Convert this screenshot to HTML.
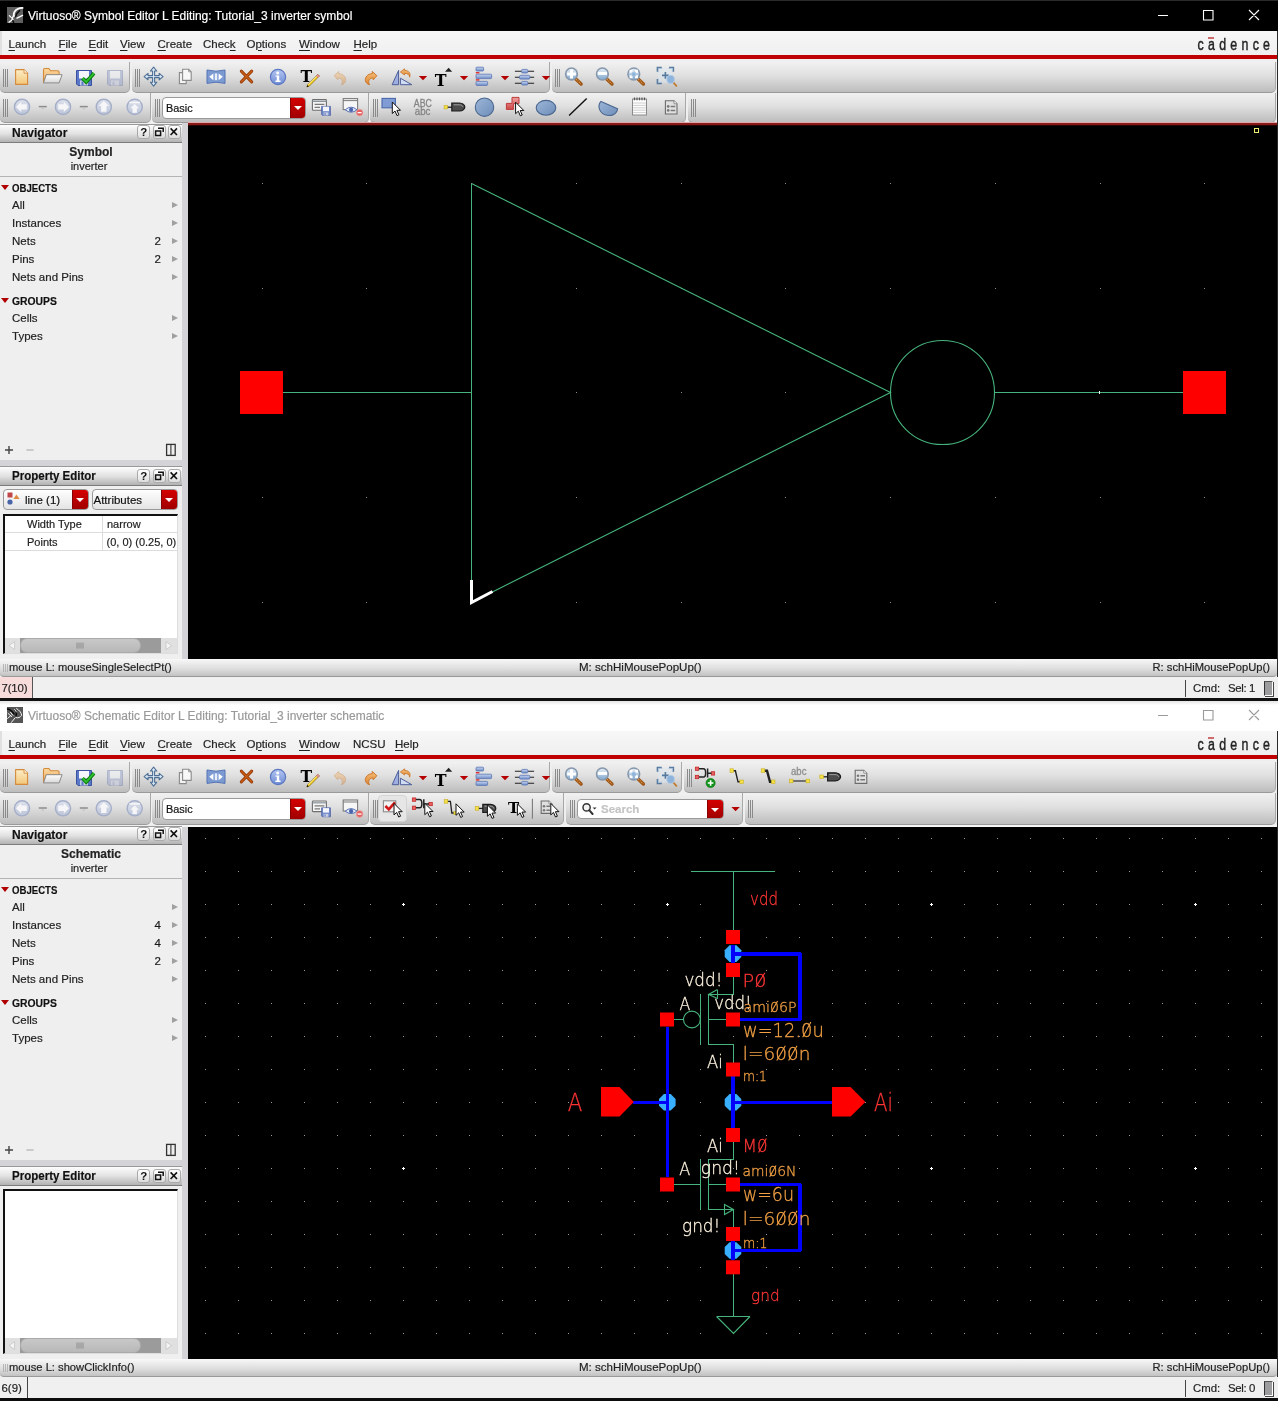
<!DOCTYPE html>
<html><head><meta charset="utf-8"><title>Virtuoso</title>
<style>
*{box-sizing:border-box;margin:0;padding:0}
html,body{width:1278px;height:1401px;overflow:hidden;background:#efefef}
body{will-change:transform;-webkit-text-stroke:0.18px;font-family:"Liberation Sans","DejaVu Sans",sans-serif;font-size:12px;color:#1a1a1a;position:relative}
.abs{position:absolute}
.win{position:absolute;left:0;width:1278px}
.title{position:absolute;left:0;top:0;width:1278px;height:31px;font-size:12px;line-height:31px;white-space:nowrap}
.title span.t{position:absolute;left:28px;top:0}
.menubar{position:absolute;left:0;width:1278px;height:24px;background:linear-gradient(#f7f7f7,#efefef);border-left:2px solid #e0e0e0}
.menubar span{position:absolute;top:0.8px;line-height:25px;font-size:11.5px;white-space:nowrap;color:#222}
.menubar u{text-decoration:underline;text-underline-offset:2px}
.redline{position:absolute;left:0;width:1278px;height:4px;background:#c00000}
.tb{position:absolute;background:linear-gradient(#f1f1f1 0%,#e0e0e0 45%,#bdbdbd 100%);border-bottom:1px solid #9a9a9a;border-right:1px solid #a8a8a8;border-radius:0 0 5px 5px}
.grip{position:absolute;width:5px;border-left:1px solid #8a8a8a;border-right:1px solid #8a8a8a}
.grip:after{content:"";position:absolute;left:1px;top:0;bottom:0;width:1px;background:#8a8a8a}
.ic{position:absolute;overflow:visible}
.panelhdr{position:absolute;left:0;width:182px;height:19px;background:linear-gradient(#fdfdfd,#e2e2e2 50%,#b2b2b2);border-bottom:1px solid #7c7c7c;border-top:1px solid #999;font-weight:bold;font-size:12px;line-height:17px;padding-left:12px;color:#111}
.pbtn{position:absolute;top:1px;width:14px;height:14px;border:1px solid #aaa;border-radius:3px;background:linear-gradient(#fff,#ddd)}
.nav{position:absolute;left:0;width:182px;background:#efefef}
.nav .row{position:absolute;left:12px;font-size:11.5px;line-height:14px;white-space:nowrap;color:#222}
.nav .sec{position:absolute;left:12px;font-size:11.5px;font-weight:bold;line-height:14px;color:#111}
.nav .cnt{position:absolute;left:140px;width:21px;text-align:right;font-size:11.5px;line-height:14px}
.tri{position:absolute;left:172px;width:0;height:0;border-left:6.2px solid #a0a0a0;border-top:3.6px solid transparent;border-bottom:3.6px solid transparent}
.dtri{position:absolute;left:1px;width:0;height:0;border-top:5px solid #b00000;border-left:4px solid transparent;border-right:4px solid transparent}
.split{position:absolute;left:182px;width:6px;background:#d4d4d8}
.canvas{position:absolute;left:188px;width:1088px;background:#000;overflow:hidden}
.status{position:absolute;left:0;width:1278px;height:18px;background:linear-gradient(#f8f8f8,#dcdcdc 60%,#c2c2c2);border-bottom:1px solid #999;border-radius:0 0 4px 4px;font-size:11.35px;line-height:16px;color:#222}
.status span{position:absolute;top:0;white-space:nowrap}
.cmd{position:absolute;left:0;width:1278px;height:21px;background:#f0f0f0;font-size:11.4px;line-height:23.5px;color:#222}
.cmd span{position:absolute;top:0;white-space:nowrap}
.combo{position:absolute;height:21px;border:1px solid #9a9a9a;border-radius:4px;background:#fff;font-size:11.3px;line-height:20.5px;padding-left:2.6px;color:#111;overflow:hidden}
.combo i{position:absolute;right:0;top:0;bottom:0;width:15px;background:linear-gradient(#d40000,#a00000);border-left:1px solid #800}
.combo i:after{content:"";position:absolute;left:3px;top:7.5px;border-top:4.5px solid #fff;border-left:4px solid transparent;border-right:4px solid transparent}
.hshtxt{font-family:"Liberation Sans","DejaVu Sans",sans-serif}
</style></head><body>

<svg width="0" height="0" style="position:absolute"><defs>
<linearGradient id="gNew" x1="0" y1="0" x2="0" y2="1"><stop offset="0" stop-color="#fdeec8"/><stop offset="1" stop-color="#f2c578"/></linearGradient>
<linearGradient id="gFold" x1="0" y1="0" x2="0" y2="1"><stop offset="0" stop-color="#fbd9a0"/><stop offset="1" stop-color="#eea95c"/></linearGradient>
<linearGradient id="gFlap" x1="0" y1="0" x2="0" y2="1"><stop offset="0" stop-color="#ffffff"/><stop offset="1" stop-color="#d8d8d8"/></linearGradient>
<linearGradient id="gBlue" x1="0" y1="0" x2="0" y2="1"><stop offset="0" stop-color="#b4c6f2"/><stop offset="1" stop-color="#6e8cd4"/></linearGradient>
<linearGradient id="gBlue2" x1="0" y1="0" x2="1" y2="1"><stop offset="0" stop-color="#9db6d8"/><stop offset="1" stop-color="#6d8db8"/></linearGradient>
<linearGradient id="gNavD" x1="0" y1="0" x2="0" y2="1"><stop offset="0" stop-color="#dde1ec"/><stop offset="1" stop-color="#bcc5d8"/></linearGradient>
<linearGradient id="gRed" x1="0" y1="0" x2="0" y2="1"><stop offset="0" stop-color="#f0a0a0"/><stop offset="1" stop-color="#cc4a4a"/></linearGradient>
<linearGradient id="gLens" x1="0" y1="0" x2="0" y2="1"><stop offset="0" stop-color="#e8f0f8"/><stop offset="1" stop-color="#7fa6cc"/></linearGradient>
<linearGradient id="gBar" x1="0" y1="0" x2="0" y2="1"><stop offset="0" stop-color="#c8d6f0"/><stop offset="1" stop-color="#6e8cc8"/></linearGradient>
<linearGradient id="gOr" x1="0" y1="0" x2="0" y2="1"><stop offset="0" stop-color="#f6c07a"/><stop offset="1" stop-color="#dc8430"/></linearGradient>
</defs></svg>
<div class="title" style="top:0;background:#000;color:#fff;box-shadow:inset 0 1px 0 #2a2a2a"><svg class="ic" style="left:7px;top:7px" width="16" height="16" viewBox="0 0 16 16"><rect width="16" height="16" fill="#606060"/><path d="M12.6 3.6 C10.6 5.2 9.2 7.4 8.6 9.6 M4 10.4 L6.6 15.4" stroke="#0c0c0c" stroke-width="1.5" fill="none" stroke-linecap="round"/><path d="M15.6 0.9 C12 1 9 2.4 7.4 5 C6.5 6.6 6.5 8 7 9" stroke="#fff" stroke-width="1.8" fill="none" stroke-linecap="round"/><path d="M2.4 8.6 L6 12.4 M6.6 8 L4.6 13.4 L2 15.2 M10 11.2 L15.6 8.4" stroke="#fff" stroke-width="1.3" fill="none" stroke-linecap="round"/></svg>
<span class="t" style="top:1px">Virtuoso® Symbol Editor L Editing: Tutorial_3 inverter symbol</span><svg class="ic" style="left:1150px;top:0" width="120" height="31" viewBox="1150 0 120 31"><path d="M1158 15.5H1168 M1203.5 10.5H1213V20H1203.5Z M1249 10L1259 20M1259 10L1249 20" stroke="#fff" stroke-width="1.1" fill="none"/></svg>
</div>
<div class="menubar" style="top:31px">
<span style="left:6.5px"><u>L</u>aunch</span>
<span style="left:56.5px"><u>F</u>ile</span>
<span style="left:86.5px"><u>E</u>dit</span>
<span style="left:118px"><u>V</u>iew</span>
<span style="left:155.5px"><u>C</u>reate</span>
<span style="left:201px">Chec<u>k</u></span>
<span style="left:244.5px">O<u>p</u>tions</span>
<span style="left:297px"><u>W</u>indow</span>
<span style="left:351.5px"><u>H</u>elp</span>
<svg class="ic" style="left:1188px;top:0" width="88" height="24" viewBox="0 0 88 24"><g transform="translate(7.6 0) scale(0.72 1)"><text x="0" y="19.4" font-family="'Liberation Sans','DejaVu Sans',sans-serif" font-size="17.2" fill="#222" stroke="#222" stroke-width="0.45" textLength="100.5" lengthAdjust="spacing">cadence</text></g><rect x="18" y="6.3" width="6" height="1.4" fill="#c03030"/></svg>

</div>
<div class="redline" style="top:55px"></div>
<div class="tb" style="left:0px;top:62px;width:130px;height:31px"></div>
<div class="tb" style="left:132px;top:62px;width:418px;height:31px"></div>
<div class="tb" style="left:552px;top:62px;width:724px;height:31px"></div>
<div class="grip" style="left:3px;top:69px;height:18px"></div>
<div class="grip" style="left:135px;top:69px;height:18px"></div>
<div class="grip" style="left:555px;top:69px;height:18px"></div>
<svg class="ic" style="left:0;top:59px" width="1278" height="34" viewBox="0 59 1278 34"><g transform="translate(21.6,77)"><path d="M-6 -7.4 H2.4 L6 -3.8 V7.4 H-6 Z" fill="url(#gNew)" stroke="#d48a3c" stroke-width="1.1" stroke-linejoin="round"/><path d="M2.4 -7.4 V-3.8 H6" fill="#fff6e0" stroke="#d48a3c" stroke-width="0.9" stroke-linejoin="round"/></g><g transform="translate(52.5,76.3)"><path d="M-9 6.5 V-6.5 Q-9 -7.8 -7.8 -7.8 H-3.6 L-2 -5.6 H5.2 Q6.6 -5.6 6.6 -4.2 V-1.5 H-6 Z" fill="url(#gFold)" stroke="#d48a3c" stroke-width="1.1" stroke-linejoin="round"/><path d="M-6.2 -1.6 H9.6 L6.6 6.6 H-9 Z" fill="url(#gFlap)" stroke="#8a8a8a" stroke-width="1" stroke-linejoin="round"/></g><g transform="translate(84,78)"><g opacity="1.0"><path d="M-7.5 -7.5 H7.5 V7.5 H-6 L-7.5 6 Z" fill="#5b78c8" stroke="#3a52a0" stroke-width="1"/><rect x="-5" y="-7" width="10" height="7.5" fill="#f4f6fb"/><rect x="-4" y="2.5" width="8" height="5" fill="#c9d0e4"/><rect x="-2.5" y="3.5" width="2" height="3.5" fill="#5b78c8"/></g><path d="M-1.5 0.2 L2.2 4 L10 -4.8" fill="none" stroke="#0a7a0a" stroke-width="3.6" stroke-linejoin="miter"/><path d="M-1.5 0.2 L2.2 4 L10 -4.8" fill="none" stroke="#2fc02f" stroke-width="1.8"/></g><g transform="translate(115,78)"><g opacity="0.42"><path d="M-7.5 -7.5 H7.5 V7.5 H-6 L-7.5 6 Z" fill="#8f9ccc" stroke="#6a78a8" stroke-width="1"/><rect x="-5" y="-7" width="10" height="7.5" fill="#f4f6fb"/><rect x="-4" y="2.5" width="8" height="5" fill="#c9d0e4"/><rect x="-2.5" y="3.5" width="2" height="3.5" fill="#8f9ccc"/></g></g><g transform="translate(153.6,76.6)"><path d="M0 -9.5 L3.2 -5.6 H1 V-1 H5.6 V-3.2 L9.5 0 L5.6 3.2 V1 H1 V5.6 H3.2 L0 9.5 L-3.2 5.6 H-1 V1 H-5.6 V3.2 L-9.5 0 L-5.6 -3.2 V-1 H-1 V-5.6 H-3.2 Z" fill="#dbe8f6" stroke="#4e6f94" stroke-width="1.1" stroke-linejoin="round"/></g><g transform="translate(185.2,76.4)"><path d="M-5.8 -3.8 H1 V7.2 H-5.8 Z" fill="#f2f2f2" stroke="#8a8a8a" stroke-width="1.1"/><path d="M-2.6 -7.2 H3.4 L6 -4.6 V4 H-2.6 Z" fill="#f8f8f8" stroke="#8a8a8a" stroke-width="1.1" stroke-linejoin="round"/><path d="M3.4 -7.2 V-4.6 H6" fill="none" stroke="#8a8a8a" stroke-width="0.8"/></g><g transform="translate(216,76.8)"><path d="M-9 -6.8 Q0 -4.4 9 -6.8 V6.6 Q0 4.2 -9 6.6 Z" fill="#7b9ad2" stroke="#5472b4" stroke-width="1"/><path d="M-6.8 0 L-2.6 -3.4 V3.4 Z M6.8 0 L2.6 -3.4 V3.4 Z" fill="#fff"/><rect x="-1.2" y="-3.4" width="2.4" height="6.8" fill="#e8eefa"/></g><g transform="translate(246.5,76.5)"><path d="M-5.2 -5.4 L5.2 5.4 M5.2 -5.4 L-5.2 5.4" stroke="#9c3c08" stroke-width="3" stroke-linecap="round"/><path d="M-5.2 -5.4 L5.2 5.4 M5.2 -5.4 L-5.2 5.4" stroke="#cc6418" stroke-width="1.2" stroke-linecap="round"/></g><g transform="translate(278,77)"><circle cx="0" cy="0" r="7.6" fill="url(#gBlue)" stroke="#5a76c0" stroke-width="1.2"/><circle cx="-0.3" cy="-4.1" r="1.5" fill="#fff"/><path d="M-2.4 -1.6 H1.2 V3.6 H2.6 V5 H-2.6 V3.6 H-1.2 V-0.2 H-2.4 Z" fill="#fff"/></g><g transform="translate(309,77)"><text x="-8.4" y="5" font-family="'DejaVu Serif','Liberation Serif',serif" font-weight="bold" font-size="16.4" fill="#000" textLength="11.6" lengthAdjust="spacingAndGlyphs">T</text><path d="M8.8 -2.6 L10.4 -1 L0.4 9 L-2.2 10 L-1.2 7.4 Z" fill="#f4d020" stroke="#8a6a10" stroke-width="0.7" stroke-linejoin="round"/><path d="M7.6 -0.8 L-0.8 7.6" stroke="#fff8c0" stroke-width="0.7"/><path d="M8.8 -2.6 L10.4 -1 L9 0.4 L7.4 -1.2 Z" fill="#f0a0a8" stroke="#b06070" stroke-width="0.6"/><path d="M-2.2 10 L-1.7 8 L-0.2 9.5 Z" fill="#111"/></g><g transform="translate(340,77)"><g opacity="0.42"><path d="M-5.9 -1.3 L-1.2 -5.6 L-1.4 -3.4 C3.6 -3.2 6.2 0.6 5.6 3.6 C5.2 5.8 3.6 7.3 1.4 7.7 C3 5.4 2.8 1.6 -1.8 0.8 L-2.2 2.8 Z" fill="url(#gOr)" stroke="#c87a30" stroke-width="0.9" stroke-linejoin="round"/></g></g><g transform="translate(371,77)"><path d="M5.9 -1.3 L1.2 -5.6 L1.4 -3.4 C-3.6 -3.2 -6.2 0.6 -5.6 3.6 C-5.2 5.8 -3.6 7.3 -1.4 7.7 C-3 5.4 -2.8 1.6 1.8 0.8 L2.2 2.8 Z" fill="url(#gOr)" stroke="#c87024" stroke-width="0.9" stroke-linejoin="round"/></g><g transform="translate(402,77)"><path d="M-3.4 -6.6 V7.7 H-9.8 Z" fill="#9eaee0" stroke="#4c5e98" stroke-width="1" stroke-linejoin="round"/><path d="M-1.6 1.2 L9.8 7.7 H-1.6 Z" fill="#d0dcf4" stroke="#4c5e98" stroke-width="1" stroke-linejoin="round"/><path d="M-1.6 -5 L2.6 -8.2 V-6.6 C7 -6.6 9 -3.6 7.6 0.2 C7.4 -2.4 5.8 -3.6 2.6 -3.6 V-2 Z" fill="url(#gOr)" stroke="#c87024" stroke-width="0.8" stroke-linejoin="round"/></g><g transform="translate(423,78)"><path d="M-4.2 -2 H4.2 L0 2.2 Z" fill="#b40000"/></g><g transform="translate(441,77)"><text x="-6.2" y="8.6" font-family="'DejaVu Serif','Liberation Serif',serif" font-weight="bold" font-size="16" fill="#000" textLength="11.8" lengthAdjust="spacingAndGlyphs">T</text><path d="M4 -5.2 L7.6 -9.2 L11.2 -5.2 Z" fill="#222"/></g><g transform="translate(464,78)"><path d="M-4.2 -2 H4.2 L0 2.2 Z" fill="#b40000"/></g><g transform="translate(483,77)"><rect x="-7" y="-9.8" width="7.6" height="3.8" rx="0.8" fill="url(#gBar)" stroke="#5874b4" stroke-width="0.8"/><rect x="-7" y="-2.8" width="15.6" height="4.4" rx="0.8" fill="url(#gBar)" stroke="#5874b4" stroke-width="0.8"/><rect x="-7" y="4.4" width="11.6" height="4" rx="0.8" fill="url(#gBar)" stroke="#5874b4" stroke-width="0.8"/><rect x="-7.2" y="-5" width="3.6" height="1.4" fill="#e03030"/><rect x="-7.2" y="2.2" width="3.6" height="1.4" fill="#e03030"/></g><g transform="translate(505,78)"><path d="M-4.2 -2 H4.2 L0 2.2 Z" fill="#b40000"/></g><g transform="translate(524.5,77)"><path d="M-9.6 -5.8 H9.6 M-9.6 0.2 H9.6 M-9.6 6.2 H9.6" stroke="#222" stroke-width="1.1"/><rect x="-3" y="-7.6" width="6.4" height="3.6" rx="1.2" fill="url(#gBar)" stroke="#5874b4" stroke-width="0.8"/><rect x="-5" y="-1.7" width="10.4" height="3.8" rx="1.2" fill="url(#gBar)" stroke="#5874b4" stroke-width="0.8"/><rect x="-3" y="4.4" width="6.4" height="3.6" rx="1.2" fill="url(#gBar)" stroke="#5874b4" stroke-width="0.8"/></g><g transform="translate(546,78)"><path d="M-4.2 -2 H4.2 L0 2.2 Z" fill="#b40000"/></g><g transform="translate(571.5,74)"><path d="M4.3 5 L9.6 10" stroke="#9c5414" stroke-width="3.4" stroke-linecap="round"/><path d="M4.6 5.3 L9.4 9.8" stroke="#e09a50" stroke-width="1.4" stroke-linecap="butt" stroke-dasharray="1 1"/><circle cx="0" cy="0" r="5.9" fill="url(#gLens)" stroke="#8797ab" stroke-width="1.5"/><path d="M-4.4 0 H4.4 M0 -4.4 V4.4" stroke="#fff" stroke-width="3"/></g><g transform="translate(602.4,74)"><path d="M4.3 5 L9.6 10" stroke="#9c5414" stroke-width="3.4" stroke-linecap="round"/><path d="M4.6 5.3 L9.4 9.8" stroke="#e09a50" stroke-width="1.4" stroke-linecap="butt" stroke-dasharray="1 1"/><circle cx="0" cy="0" r="5.9" fill="url(#gLens)" stroke="#8797ab" stroke-width="1.5"/><path d="M-4.6 -0.6 H4.6" stroke="#fff" stroke-width="3"/></g><g transform="translate(633.8,74)"><path d="M4.3 5 L9.6 10" stroke="#9c5414" stroke-width="3.4" stroke-linecap="round"/><path d="M4.6 5.3 L9.4 9.8" stroke="#e09a50" stroke-width="1.4" stroke-linecap="butt" stroke-dasharray="1 1"/><circle cx="0" cy="0" r="5.9" fill="url(#gLens)" stroke="#8797ab" stroke-width="1.5"/><path d="M-3.2 -1.2 V-3.2 H-1.2 M1.2 -3.2 H3.2 V-1.2 M3.2 1.2 V3.2 H1.2 M-1.2 3.2 H-3.2 V1.2" stroke="#fff" stroke-width="2" fill="none"/><circle r="1.8" fill="#8cb4dc"/></g><g transform="translate(665.4,75.4)"><rect x="-7.4" y="-7.4" width="14.8" height="14.8" fill="#dfe7ef" opacity="0.55"/><path d="M-8 -3.6 V-8 H-3.6 M3.6 -8 H8 V-3.6 M-8 3.6 V8 H-3.6" fill="none" stroke="#557a9e" stroke-width="1.5"/><path d="M-7 -3.2 V-7 H-3.2 M3.2 -7 H7 V-3.2 M-7 3.2 V7 H-3.2" fill="none" stroke="#a8c0d8" stroke-width="0.8"/><path d="M-3.4 0 H3.4 M0 -3.4 V3.4" stroke="#557a9e" stroke-width="1.6"/><path d="M7.5 6.6 L11 10.4" stroke="#c07a30" stroke-width="1.8" stroke-linecap="round"/><ellipse cx="5.2" cy="4" rx="3.8" ry="4.1" fill="#8fb4dc" stroke="#b4cce8" stroke-width="0.9"/></g></svg>
<div class="tb" style="left:0px;top:93px;width:151px;height:30px"></div>
<div class="tb" style="left:152px;top:93px;width:216.5px;height:30px"></div>
<div class="tb" style="left:370px;top:93px;width:316px;height:30px"></div>
<div class="tb" style="left:688px;top:93px;width:588px;height:30px"></div>
<div class="grip" style="left:3px;top:99px;height:18px"></div>
<div class="grip" style="left:155px;top:99px;height:18px"></div>
<div class="grip" style="left:373px;top:99px;height:18px"></div>
<div class="grip" style="left:691px;top:99px;height:18px"></div>
<svg class="ic" style="left:0;top:93px" width="1278" height="32" viewBox="0 93 1278 32"><g transform="translate(22,106.9)"><circle cx="0" cy="0" r="7.6" fill="url(#gNavD)" stroke="#a4aec8" stroke-width="1.4"/><path d="M-6 0 L-0.8 -5.2 V-2.7 H4.8 V2.7 H-0.8 V5.2 Z" fill="#f6f6f8"/></g><g transform="translate(42.8,106.6)"><path d="M-4 0 H4" stroke="#8c8c8c" stroke-width="1.5"/><path d="M-2 1.6 H2 L0 3.2 Z" fill="#c4c4c4"/></g><g transform="translate(63,106.9)"><circle cx="0" cy="0" r="7.6" fill="url(#gNavD)" stroke="#a4aec8" stroke-width="1.4"/><path d="M6 0 L0.8 -5.2 V-2.7 H-4.8 V2.7 H0.8 V5.2 Z" fill="#f6f6f8"/></g><g transform="translate(83.8,106.6)"><path d="M-4 0 H4" stroke="#8c8c8c" stroke-width="1.5"/><path d="M-2 1.6 H2 L0 3.2 Z" fill="#c4c4c4"/></g><g transform="translate(103.8,106.9)"><circle cx="0" cy="0" r="7.6" fill="url(#gNavD)" stroke="#a4aec8" stroke-width="1.4"/><path d="M0 -6 L-5.2 -0.8 H-2.7 V4.8 H2.7 V-0.8 H5.2 Z" fill="#f6f6f8"/></g><g transform="translate(134.7,106.9)"><circle cx="0" cy="0" r="7.6" fill="url(#gNavD)" stroke="#a4aec8" stroke-width="1.4"/><path d="M0 -2.8 L-4.4 1.4 H-2.2 V5.8 H2.2 V1.4 H4.4 Z" fill="#f6f6f8"/><rect x="-5.4" y="-5.2" width="10.8" height="1.6" fill="#f6f6f8"/></g><g transform="translate(321,107)"><rect x="-8.6" y="-7.4" width="14" height="10.6" rx="0.8" fill="#f4f4f4" stroke="#6e6e6e" stroke-width="1.1"/><path d="M-8.6 -5.6 H5.4" stroke="#8a949c" stroke-width="1.2"/><path d="M-6.4 -2.6 H3.4 M-6.4 0.4 H-1" stroke="#7a7a7a" stroke-width="1.2"/><g transform="translate(5,3.9) scale(0.6)"><g opacity="1"><path d="M-7.5 -7.5 H7.5 V7.5 H-6 L-7.5 6 Z" fill="#6c84c8" stroke="#44589c" stroke-width="1"/><rect x="-5" y="-7" width="10" height="7.5" fill="#f4f6fb"/><rect x="-4" y="2.5" width="8" height="5" fill="#c9d0e4"/><rect x="-2.5" y="3.5" width="2" height="3.5" fill="#6c84c8"/></g></g></g><g transform="translate(351.6,107)"><rect x="-8.4" y="-8.4" width="14.4" height="11" fill="#f6f6f6" stroke="#7a7a7a" stroke-width="1.1"/><path d="M-8.4 -6.4 H6" stroke="#7a7a7a" stroke-width="1"/><path d="M-6.4 2.8 Q-0.6 -2.4 5.4 2.8 Q-0.6 7.6 -6.4 2.8 Z" fill="#e4ecfa" stroke="#5a72b4" stroke-width="1"/><circle cx="-0.5" cy="2.8" r="2.1" fill="#4a64ac"/><circle cx="8" cy="5.6" r="3.4" fill="#e46060" stroke="#f0b0b0" stroke-width="0.6"/><rect x="6" y="5" width="4" height="1.3" fill="#fff"/></g><g transform="translate(391,107)"><rect x="-9" y="-8.6" width="13.4" height="9.4" fill="#7f9cd4" stroke="#4a68ac" stroke-width="1.1"/><g transform="translate(1.3,-5)"><path d="M0 0 V11.5 L2.7 9 L4.7 13.6 L6.6 12.8 L4.6 8.3 H8.2 Z" fill="#fff" stroke="#111" stroke-width="1" stroke-linejoin="round"/></g></g><g transform="translate(422.6,107)"><text x="-8.8" y="-0.2" font-family="'Liberation Sans','DejaVu Sans',sans-serif" font-size="10.2" fill="#858585" stroke="#858585" stroke-width="0.3" textLength="18" lengthAdjust="spacingAndGlyphs">ABC</text><text x="-7.8" y="8.2" font-family="'Liberation Sans','DejaVu Sans',sans-serif" font-size="10.2" fill="#858585" stroke="#858585" stroke-width="0.3" textLength="15.6" lengthAdjust="spacingAndGlyphs">abc</text></g><g transform="translate(453,107)"><path d="M-7 0.2 H-1" stroke="#222" stroke-width="1.3"/><rect x="-8.9" y="-1.5" width="3.4" height="3.4" fill="#f4e04a" stroke="#c8b020" stroke-width="0.6"/><path d="M-1.2 -4 H6.3999999999999995 C10.200000000000001 -4 11.8 -1.6 11.8 0 C11.8 1.6 10.200000000000001 4 6.3999999999999995 4 H-1.2 Z" fill="#4c4c4c" stroke="#1c1c1c" stroke-width="1.2"/><path d="M0.6000000000000001 -2.2 H6.2 C8.600000000000001 -2.2 9.8 -1 9.8 0" fill="none" stroke="#a8a8a8" stroke-width="0.9"/></g><g transform="translate(484.5,107.2)"><circle r="9.2" fill="url(#gBlue2)" stroke="#4a668e" stroke-width="1.1"/></g><g transform="translate(512.4,107)"><path d="M-0.4 -9.6 H6.6 V-3.4 H1 V2.4 H-6 V-3.6 H-0.4 Z" fill="url(#gRed)" stroke="#c03a3a" stroke-width="1"/><g transform="translate(3.2,-4.8)"><path d="M0 0 V11.5 L2.7 9 L4.7 13.6 L6.6 12.8 L4.6 8.3 H8.2 Z" fill="#fff" stroke="#111" stroke-width="1" stroke-linejoin="round"/></g></g><g transform="translate(546,107)"><ellipse rx="9.8" ry="7.4" cy="0.8" fill="url(#gBlue2)" stroke="#4a668e" stroke-width="1.1"/></g><g transform="translate(577.9,107)"><path d="M-8.8 8.6 L8.8 -8.6" stroke="#111" stroke-width="1.4"/></g><g transform="translate(608,107.4)"><path d="M-7 -6 L9.6 1.4 C9 7 3 9.4 -3 7.4 C-8.6 5.4 -11 -1.8 -7 -6 Z" fill="url(#gBlue2)" stroke="#4a668e" stroke-width="1.1" stroke-linejoin="round"/></g><g transform="translate(639.5,106.6)"><rect x="-7" y="-7.6" width="14" height="16" fill="#fdfdfd" stroke="#8a8a8a" stroke-width="1"/><path d="M-6.4 -3.6 H6.4 M-6.4 -1.2 H6.4 M-6.4 1.2 H6.4 M-6.4 3.6 H6.4 M-6.4 6 H6.4" stroke="#c4c4c4" stroke-width="0.8"/><path d="M-5 -9 V-6.4 M-2.5 -9 V-6.4 M0 -9 V-6.4 M2.5 -9 V-6.4 M5 -9 V-6.4" stroke="#555" stroke-width="1.2"/></g><g transform="translate(671.2,107.4)"><path d="M-5.8 -6.6 H2.8 L5.8 -3.5999999999999996 V6.6 H-5.8 Z" fill="#e0e0e0" stroke="#6c6c6c" stroke-width="1.1"/><path d="M2.8 -6.6 V-3.5999999999999996 H5.8" fill="#fff" stroke="#7a7a7a" stroke-width="0.8"/><circle cx="-3.0" cy="-1" r="1.3" fill="#777"/><circle cx="-3.0" cy="3" r="1.3" fill="#777"/><path d="M-0.5999999999999996 -1 H4.0 M-0.5999999999999996 3 H4.0" stroke="#777" stroke-width="1.5"/></g></svg>
<div class="combo" style="left:162px;top:97px;width:144px;height:22px;font-size:10.9px;line-height:21.6px;padding-left:3px">Basic<i></i></div>
<div class="abs" style="left:0;top:123px;width:182px;height:536px;background:#efefef"></div>
<div class="split" style="top:123px;height:536px"></div>
<div class="panelhdr" style="top:124px;height:19px;line-height:17px">Navigator<div class="pbtn" style="left:137px;top:0.4px;width:13px;height:13.6px"></div><div class="pbtn" style="left:152.5px;top:0.4px;width:13px;height:13.6px"></div><div class="pbtn" style="left:167.5px;top:0.4px;width:13px;height:13.6px"></div><svg class="ic" style="left:137px;top:0.4px" width="45" height="14" viewBox="0 0 45 14"><text x="3.2" y="11" font-family="'Liberation Sans','DejaVu Sans',sans-serif" font-weight="bold" font-size="11.5" fill="#111">?</text><path d="M21 3.2 H26.2 V7 M18.6 6 H23.6 V10.6 H18.6 Z" fill="none" stroke="#111" stroke-width="1.5"/><path d="M33.6 3.4 L40 10 M40 3.4 L33.6 10" stroke="#111" stroke-width="1.6"/></svg></div>
<div class="abs" style="left:0;top:145px;width:182px;text-align:center;font-weight:bold;font-size:12px;line-height:14px;color:#222">Symbol</div>
<div class="abs" style="left:0;top:159px;width:178px;text-align:center;font-size:11px;line-height:14px;color:#222">inverter</div>
<div class="abs" style="left:0;top:176px;width:182px;height:1px;background:#b4b4b4"></div>
<div class="nav" style="top:0;height:0">
<div class="sec" style="top:181px;transform:scaleX(0.835);transform-origin:0 50%">OBJECTS</div>
<div class="dtri" style="top:185px"></div>
<div class="row" style="top:198px">All</div>
<div class="tri" style="top:201.5px"></div>
<div class="row" style="top:216px">Instances</div>
<div class="tri" style="top:219.5px"></div>
<div class="row" style="top:234px">Nets</div>
<div class="tri" style="top:237.5px"></div>
<div class="cnt" style="top:234px">2</div>
<div class="row" style="top:252px">Pins</div>
<div class="tri" style="top:255.5px"></div>
<div class="cnt" style="top:252px">2</div>
<div class="row" style="top:270px">Nets and Pins</div>
<div class="tri" style="top:273.5px"></div>
<div class="sec" style="top:294px;transform:scaleX(0.9);transform-origin:0 50%">GROUPS</div>
<div class="dtri" style="top:298px"></div>
<div class="row" style="top:311px">Cells</div>
<div class="tri" style="top:314.5px"></div>
<div class="row" style="top:329px">Types</div>
<div class="tri" style="top:332.5px"></div>
</div>
<svg class="ic" style="left:0;top:440px" width="182" height="20" viewBox="0 0 182 20"><path d="M5 10 H13 M9 6 V14" stroke="#444" stroke-width="1.4"/><path d="M26.4 10 H33.6" stroke="#bbb" stroke-width="1.4"/><rect x="166.6" y="4.4" width="8.6" height="11" fill="none" stroke="#333" stroke-width="1.3"/><path d="M170.9 4.4 V15.4" stroke="#333" stroke-width="1.1"/></svg>
<div class="abs" style="left:0;top:460px;width:182px;height:6px;background:#d4d4d8"></div>
<div class="panelhdr" style="top:466px;height:20px;line-height:19px"><span style="display:inline-block;transform:scaleX(0.96);transform-origin:0 50%">Property Editor</span><div class="pbtn" style="left:137px;top:2px;width:13px;height:13.6px"></div><div class="pbtn" style="left:152.5px;top:2px;width:13px;height:13.6px"></div><div class="pbtn" style="left:167.5px;top:2px;width:13px;height:13.6px"></div><svg class="ic" style="left:137px;top:2px" width="45" height="14" viewBox="0 0 45 14"><text x="3.2" y="11" font-family="'Liberation Sans','DejaVu Sans',sans-serif" font-weight="bold" font-size="11.5" fill="#111">?</text><path d="M21 3.2 H26.2 V7 M18.6 6 H23.6 V10.6 H18.6 Z" fill="none" stroke="#111" stroke-width="1.5"/><path d="M33.6 3.4 L40 10 M40 3.4 L33.6 10" stroke="#111" stroke-width="1.6"/></svg></div>
<div class="combo" style="left:3px;top:489px;width:86px;height:21px;padding-left:21px;font-size:11.5px;background:linear-gradient(#fff,#e4e4e4)">line (1)<i style="width:16px"></i><svg class="ic" style="left:3px;top:2px" width="14" height="14" viewBox="0 0 14 14"><rect x="0.5" y="0.5" width="5" height="5" fill="#c04848"/><path d="M6.4 7 L9.4 2.4 L12.6 7 Z" fill="#e08a40"/><circle cx="3" cy="10" r="2.6" fill="#4a64a8"/></svg></div>
<div class="combo" style="left:91.5px;top:489px;width:86.5px;height:21px;padding-left:1px;font-size:11.5px;background:linear-gradient(#fff,#e4e4e4)">Attributes<i style="width:16px"></i></div>
<div class="abs" style="left:3px;top:514px;width:175px;height:140px;background:#fff;border-top:2px solid #111;border-left:2px solid #111;border-right:1px solid #ddd;border-bottom:1px solid #ddd"></div>
<div class="abs" style="left:5px;top:532px;width:172px;height:1px;background:#dcdcdc"></div><div class="abs" style="left:5px;top:550px;width:172px;height:1px;background:#dcdcdc"></div><div class="abs" style="left:102px;top:516px;width:1px;height:35px;background:#dcdcdc"></div>
<div class="abs" style="left:27px;top:517.4px;font-size:11px;line-height:14px;white-space:nowrap;color:#222">Width Type</div>
<div class="abs" style="left:107px;top:517.4px;font-size:11px;line-height:14px;white-space:nowrap;color:#222">narrow</div>
<div class="abs" style="left:27px;top:535.4px;font-size:11px;line-height:14px;white-space:nowrap;color:#222">Points</div>
<div class="abs" style="left:106.5px;top:535.4px;font-size:11px;line-height:14px;white-space:nowrap;color:#222">(0, 0) (0.25, 0)</div>
<div class="abs" style="left:5px;top:638px;width:172px;height:15px;background:#9b9b9b"></div>
<div class="abs" style="left:5px;top:638px;width:15px;height:15px;background:#e0e0e0"></div><div class="abs" style="left:161px;top:638px;width:16px;height:15px;background:#e0e0e0"></div>
<div class="abs" style="left:20px;top:638px;width:121px;height:15px;background:linear-gradient(#c8c8c8,#b8b8b8);border-radius:7px;border:1px solid #aaa"></div>
<svg class="ic" style="left:5px;top:638px" width="172" height="15" viewBox="0 0 172 15"><path d="M9.6 3.6 L4 7.6 L9.6 11.6 Z" fill="#f4f4f4" stroke="#c4c4c4" stroke-width="0.8"/><path d="M161 3.6 L166.6 7.6 L161 11.6 Z" fill="#f4f4f4" stroke="#c4c4c4" stroke-width="0.8"/><path d="M72 4.6 V10.6 M74 4.6 V10.6 M76 4.6 V10.6 M78 4.6 V10.6" stroke="#888" stroke-width="0.9"/></svg>
<div class="abs" style="left:188px;top:122px;width:1090px;height:4px;background:linear-gradient(#e0a8a8 0,#e0a8a8 25%,#8a1a1a 25%,#861818 75%,#3a0808 75%,#180000 100%)"></div>
<svg class="ic" style="left:188px;top:126px;background:#000" width="1089" height="533" viewBox="188 126 1089 533">
<path d="M262 183h1v1h-1zM262 288h1v1h-1zM262 392h1v1h-1zM262 497h1v1h-1zM262 602h1v1h-1zM366 183h1v1h-1zM366 288h1v1h-1zM366 392h1v1h-1zM366 497h1v1h-1zM366 602h1v1h-1zM471 183h1v1h-1zM471 288h1v1h-1zM471 392h1v1h-1zM471 497h1v1h-1zM471 602h1v1h-1zM576 183h1v1h-1zM576 288h1v1h-1zM576 392h1v1h-1zM576 497h1v1h-1zM576 602h1v1h-1zM681 183h1v1h-1zM681 288h1v1h-1zM681 392h1v1h-1zM681 497h1v1h-1zM681 602h1v1h-1zM785 183h1v1h-1zM785 288h1v1h-1zM785 392h1v1h-1zM785 497h1v1h-1zM785 602h1v1h-1zM890 183h1v1h-1zM890 288h1v1h-1zM890 392h1v1h-1zM890 497h1v1h-1zM890 602h1v1h-1zM995 183h1v1h-1zM995 288h1v1h-1zM995 392h1v1h-1zM995 497h1v1h-1zM995 602h1v1h-1zM1100 183h1v1h-1zM1100 288h1v1h-1zM1100 392h1v1h-1zM1100 497h1v1h-1zM1100 602h1v1h-1zM1204 183h1v1h-1zM1204 288h1v1h-1zM1204 392h1v1h-1zM1204 497h1v1h-1zM1204 602h1v1h-1z" fill="#8c8c8c" shape-rendering="crispEdges"/>
<path d="M471.5 183.5 V603 M283 392.5 H471.5 M995 392.5 H1183" fill="none" stroke="#46b47c" stroke-width="1" shape-rendering="crispEdges"/>
<path d="M471.5 183.5 L890.5 392.5 L471.5 602.5" fill="none" stroke="#46b47c" stroke-width="1.1"/>
<circle cx="942.5" cy="392.5" r="52" fill="none" stroke="#46b47c" stroke-width="1.1"/>
<rect x="240" y="371" width="43" height="43" fill="#ff0000"/><rect x="1183" y="371" width="43" height="43" fill="#ff0000"/>
<rect x="1099" y="391" width="1" height="3" fill="#fff"/>
<path d="M471.5 580 V602.5 L492.5 591.5" fill="none" stroke="#fff" stroke-width="3" stroke-linejoin="miter"/>
<rect x="1254.5" y="128.5" width="4" height="4" fill="none" stroke="#f0ec70" stroke-width="1" shape-rendering="crispEdges"/>
</svg>
<div class="abs" style="left:1277px;top:31px;width:1px;height:668px;background:#2a2a2a"></div>
<div class="cmd" style="top:677px">
<div class="abs" style="left:0;top:0;width:33px;height:21px;background:#f8dcdc;border-right:1px solid #555"></div><span style="left:1.5px;letter-spacing:-0.15px">7(10)</span>
<div class="abs" style="left:1185px;top:3px;width:1px;height:17px;background:#444"></div><span style="left:1193px">Cmd:</span><span style="left:1228px;letter-spacing:-0.35px">Sel: 1</span>
<div class="abs" style="left:1264px;top:4px;width:9px;height:15px;background:#9c9c9e;border-left:1px solid #333;border-top:1px solid #555;border-right:1px solid #fff;border-bottom:1px solid #fff;box-shadow:1px 1px 0 #444"></div>
</div>
<div class="status" style="top:659px;width:1277px"><svg class="ic" style="left:3px;top:5px" width="6" height="8" viewBox="0 0 6 8"><path d="M0.5 0V8M2.5 0V8M4.5 0V8" stroke="#aaa" stroke-width="0.8"/></svg><span style="left:9px;font-size:11.18px">mouse L: mouseSingleSelectPt()</span><span style="left:579px;font-size:11.55px">M: schHiMousePopUp()</span><span style="left:1152.5px;font-size:11.2px">R: schHiMousePopUp()</span></div>
<div class="abs" style="left:0;top:698px;width:1278px;height:3px;background:#0c0c0c"></div><div class="abs" style="left:0;top:698px;width:1278px;height:3px;background:#111"></div>
<div class="title" style="top:701px;height:30px;line-height:30px;background:linear-gradient(#e4e4e4,#fff 4px);color:#999"><svg class="ic" style="left:7px;top:6px" width="16" height="16" viewBox="0 0 16 16"><rect width="16" height="16" fill="#555"/><path d="M0.6 2 C3 2.4 5.4 4.4 7 7 M8 3 C9.4 4.6 9.8 6.6 9 8.6" stroke="#0c0c0c" stroke-width="1.6" fill="none" stroke-linecap="round"/><path d="M1 6.4 L4.6 9.6 M3.6 5.4 L6 8.4 M0.6 11.4 L4 8.4 M4.4 15.4 L8 11 M9.6 1.6 C12.6 3.4 14.6 6 14.6 8.4 C13.4 10.4 11 11.4 9 10.6 M7.6 2.4 L9.4 5" stroke="#f4f4f4" stroke-width="1" fill="none" stroke-linecap="round"/></svg>
<span class="t">Virtuoso® Schematic Editor L Editing: Tutorial_3 inverter schematic</span><svg class="ic" style="left:1150px;top:0" width="120" height="30" viewBox="1150 0 120 30"><path d="M1158 14.5H1168 M1203.5 9.5H1213V19H1203.5Z M1249 9L1259 19M1259 9L1249 19" stroke="#9a9a9a" stroke-width="1.1" fill="none"/></svg>
</div>
<div class="menubar" style="top:731px">
<span style="left:6.5px"><u>L</u>aunch</span>
<span style="left:56.5px"><u>F</u>ile</span>
<span style="left:86.5px"><u>E</u>dit</span>
<span style="left:118px"><u>V</u>iew</span>
<span style="left:155.5px"><u>C</u>reate</span>
<span style="left:201px">Chec<u>k</u></span>
<span style="left:244.5px">O<u>p</u>tions</span>
<span style="left:297px"><u>W</u>indow</span>
<span style="left:351px">NCSU</span>
<span style="left:393px"><u>H</u>elp</span>
<svg class="ic" style="left:1188px;top:0" width="88" height="24" viewBox="0 0 88 24"><g transform="translate(7.6 0) scale(0.72 1)"><text x="0" y="19.4" font-family="'Liberation Sans','DejaVu Sans',sans-serif" font-size="17.2" fill="#222" stroke="#222" stroke-width="0.45" textLength="100.5" lengthAdjust="spacing">cadence</text></g><rect x="18" y="6.3" width="6" height="1.4" fill="#c03030"/></svg>

</div>
<div class="redline" style="top:755px"></div>
<div class="tb" style="left:0px;top:762px;width:130px;height:31px"></div>
<div class="tb" style="left:132px;top:762px;width:418px;height:31px"></div>
<div class="tb" style="left:552px;top:762px;width:130px;height:31px"></div>
<div class="tb" style="left:684px;top:762px;width:592px;height:31px"></div>
<div class="grip" style="left:3px;top:769px;height:18px"></div>
<div class="grip" style="left:135px;top:769px;height:18px"></div>
<div class="grip" style="left:555px;top:769px;height:18px"></div>
<div class="grip" style="left:687px;top:769px;height:18px"></div>
<svg class="ic" style="left:0;top:759px" width="1278" height="34" viewBox="0 759 1278 34"><g transform="translate(21.6,777)"><path d="M-6 -7.4 H2.4 L6 -3.8 V7.4 H-6 Z" fill="url(#gNew)" stroke="#d48a3c" stroke-width="1.1" stroke-linejoin="round"/><path d="M2.4 -7.4 V-3.8 H6" fill="#fff6e0" stroke="#d48a3c" stroke-width="0.9" stroke-linejoin="round"/></g><g transform="translate(52.5,776.3)"><path d="M-9 6.5 V-6.5 Q-9 -7.8 -7.8 -7.8 H-3.6 L-2 -5.6 H5.2 Q6.6 -5.6 6.6 -4.2 V-1.5 H-6 Z" fill="url(#gFold)" stroke="#d48a3c" stroke-width="1.1" stroke-linejoin="round"/><path d="M-6.2 -1.6 H9.6 L6.6 6.6 H-9 Z" fill="url(#gFlap)" stroke="#8a8a8a" stroke-width="1" stroke-linejoin="round"/></g><g transform="translate(84,778)"><g opacity="1.0"><path d="M-7.5 -7.5 H7.5 V7.5 H-6 L-7.5 6 Z" fill="#5b78c8" stroke="#3a52a0" stroke-width="1"/><rect x="-5" y="-7" width="10" height="7.5" fill="#f4f6fb"/><rect x="-4" y="2.5" width="8" height="5" fill="#c9d0e4"/><rect x="-2.5" y="3.5" width="2" height="3.5" fill="#5b78c8"/></g><path d="M-1.5 0.2 L2.2 4 L10 -4.8" fill="none" stroke="#0a7a0a" stroke-width="3.6" stroke-linejoin="miter"/><path d="M-1.5 0.2 L2.2 4 L10 -4.8" fill="none" stroke="#2fc02f" stroke-width="1.8"/></g><g transform="translate(115,778)"><g opacity="0.42"><path d="M-7.5 -7.5 H7.5 V7.5 H-6 L-7.5 6 Z" fill="#8f9ccc" stroke="#6a78a8" stroke-width="1"/><rect x="-5" y="-7" width="10" height="7.5" fill="#f4f6fb"/><rect x="-4" y="2.5" width="8" height="5" fill="#c9d0e4"/><rect x="-2.5" y="3.5" width="2" height="3.5" fill="#8f9ccc"/></g></g><g transform="translate(153.6,776.6)"><path d="M0 -9.5 L3.2 -5.6 H1 V-1 H5.6 V-3.2 L9.5 0 L5.6 3.2 V1 H1 V5.6 H3.2 L0 9.5 L-3.2 5.6 H-1 V1 H-5.6 V3.2 L-9.5 0 L-5.6 -3.2 V-1 H-1 V-5.6 H-3.2 Z" fill="#dbe8f6" stroke="#4e6f94" stroke-width="1.1" stroke-linejoin="round"/></g><g transform="translate(185.2,776.4)"><path d="M-5.8 -3.8 H1 V7.2 H-5.8 Z" fill="#f2f2f2" stroke="#8a8a8a" stroke-width="1.1"/><path d="M-2.6 -7.2 H3.4 L6 -4.6 V4 H-2.6 Z" fill="#f8f8f8" stroke="#8a8a8a" stroke-width="1.1" stroke-linejoin="round"/><path d="M3.4 -7.2 V-4.6 H6" fill="none" stroke="#8a8a8a" stroke-width="0.8"/></g><g transform="translate(216,776.8)"><path d="M-9 -6.8 Q0 -4.4 9 -6.8 V6.6 Q0 4.2 -9 6.6 Z" fill="#7b9ad2" stroke="#5472b4" stroke-width="1"/><path d="M-6.8 0 L-2.6 -3.4 V3.4 Z M6.8 0 L2.6 -3.4 V3.4 Z" fill="#fff"/><rect x="-1.2" y="-3.4" width="2.4" height="6.8" fill="#e8eefa"/></g><g transform="translate(246.5,776.5)"><path d="M-5.2 -5.4 L5.2 5.4 M5.2 -5.4 L-5.2 5.4" stroke="#9c3c08" stroke-width="3" stroke-linecap="round"/><path d="M-5.2 -5.4 L5.2 5.4 M5.2 -5.4 L-5.2 5.4" stroke="#cc6418" stroke-width="1.2" stroke-linecap="round"/></g><g transform="translate(278,777)"><circle cx="0" cy="0" r="7.6" fill="url(#gBlue)" stroke="#5a76c0" stroke-width="1.2"/><circle cx="-0.3" cy="-4.1" r="1.5" fill="#fff"/><path d="M-2.4 -1.6 H1.2 V3.6 H2.6 V5 H-2.6 V3.6 H-1.2 V-0.2 H-2.4 Z" fill="#fff"/></g><g transform="translate(309,777)"><text x="-8.4" y="5" font-family="'DejaVu Serif','Liberation Serif',serif" font-weight="bold" font-size="16.4" fill="#000" textLength="11.6" lengthAdjust="spacingAndGlyphs">T</text><path d="M8.8 -2.6 L10.4 -1 L0.4 9 L-2.2 10 L-1.2 7.4 Z" fill="#f4d020" stroke="#8a6a10" stroke-width="0.7" stroke-linejoin="round"/><path d="M7.6 -0.8 L-0.8 7.6" stroke="#fff8c0" stroke-width="0.7"/><path d="M8.8 -2.6 L10.4 -1 L9 0.4 L7.4 -1.2 Z" fill="#f0a0a8" stroke="#b06070" stroke-width="0.6"/><path d="M-2.2 10 L-1.7 8 L-0.2 9.5 Z" fill="#111"/></g><g transform="translate(340,777)"><g opacity="0.42"><path d="M-5.9 -1.3 L-1.2 -5.6 L-1.4 -3.4 C3.6 -3.2 6.2 0.6 5.6 3.6 C5.2 5.8 3.6 7.3 1.4 7.7 C3 5.4 2.8 1.6 -1.8 0.8 L-2.2 2.8 Z" fill="url(#gOr)" stroke="#c87a30" stroke-width="0.9" stroke-linejoin="round"/></g></g><g transform="translate(371,777)"><path d="M5.9 -1.3 L1.2 -5.6 L1.4 -3.4 C-3.6 -3.2 -6.2 0.6 -5.6 3.6 C-5.2 5.8 -3.6 7.3 -1.4 7.7 C-3 5.4 -2.8 1.6 1.8 0.8 L2.2 2.8 Z" fill="url(#gOr)" stroke="#c87024" stroke-width="0.9" stroke-linejoin="round"/></g><g transform="translate(402,777)"><path d="M-3.4 -6.6 V7.7 H-9.8 Z" fill="#9eaee0" stroke="#4c5e98" stroke-width="1" stroke-linejoin="round"/><path d="M-1.6 1.2 L9.8 7.7 H-1.6 Z" fill="#d0dcf4" stroke="#4c5e98" stroke-width="1" stroke-linejoin="round"/><path d="M-1.6 -5 L2.6 -8.2 V-6.6 C7 -6.6 9 -3.6 7.6 0.2 C7.4 -2.4 5.8 -3.6 2.6 -3.6 V-2 Z" fill="url(#gOr)" stroke="#c87024" stroke-width="0.8" stroke-linejoin="round"/></g><g transform="translate(423,778)"><path d="M-4.2 -2 H4.2 L0 2.2 Z" fill="#b40000"/></g><g transform="translate(441,777)"><text x="-6.2" y="8.6" font-family="'DejaVu Serif','Liberation Serif',serif" font-weight="bold" font-size="16" fill="#000" textLength="11.8" lengthAdjust="spacingAndGlyphs">T</text><path d="M4 -5.2 L7.6 -9.2 L11.2 -5.2 Z" fill="#222"/></g><g transform="translate(464,778)"><path d="M-4.2 -2 H4.2 L0 2.2 Z" fill="#b40000"/></g><g transform="translate(483,777)"><rect x="-7" y="-9.8" width="7.6" height="3.8" rx="0.8" fill="url(#gBar)" stroke="#5874b4" stroke-width="0.8"/><rect x="-7" y="-2.8" width="15.6" height="4.4" rx="0.8" fill="url(#gBar)" stroke="#5874b4" stroke-width="0.8"/><rect x="-7" y="4.4" width="11.6" height="4" rx="0.8" fill="url(#gBar)" stroke="#5874b4" stroke-width="0.8"/><rect x="-7.2" y="-5" width="3.6" height="1.4" fill="#e03030"/><rect x="-7.2" y="2.2" width="3.6" height="1.4" fill="#e03030"/></g><g transform="translate(505,778)"><path d="M-4.2 -2 H4.2 L0 2.2 Z" fill="#b40000"/></g><g transform="translate(524.5,777)"><path d="M-9.6 -5.8 H9.6 M-9.6 0.2 H9.6 M-9.6 6.2 H9.6" stroke="#222" stroke-width="1.1"/><rect x="-3" y="-7.6" width="6.4" height="3.6" rx="1.2" fill="url(#gBar)" stroke="#5874b4" stroke-width="0.8"/><rect x="-5" y="-1.7" width="10.4" height="3.8" rx="1.2" fill="url(#gBar)" stroke="#5874b4" stroke-width="0.8"/><rect x="-3" y="4.4" width="6.4" height="3.6" rx="1.2" fill="url(#gBar)" stroke="#5874b4" stroke-width="0.8"/></g><g transform="translate(546,778)"><path d="M-4.2 -2 H4.2 L0 2.2 Z" fill="#b40000"/></g><g transform="translate(571.5,774)"><path d="M4.3 5 L9.6 10" stroke="#9c5414" stroke-width="3.4" stroke-linecap="round"/><path d="M4.6 5.3 L9.4 9.8" stroke="#e09a50" stroke-width="1.4" stroke-linecap="butt" stroke-dasharray="1 1"/><circle cx="0" cy="0" r="5.9" fill="url(#gLens)" stroke="#8797ab" stroke-width="1.5"/><path d="M-4.4 0 H4.4 M0 -4.4 V4.4" stroke="#fff" stroke-width="3"/></g><g transform="translate(602.4,774)"><path d="M4.3 5 L9.6 10" stroke="#9c5414" stroke-width="3.4" stroke-linecap="round"/><path d="M4.6 5.3 L9.4 9.8" stroke="#e09a50" stroke-width="1.4" stroke-linecap="butt" stroke-dasharray="1 1"/><circle cx="0" cy="0" r="5.9" fill="url(#gLens)" stroke="#8797ab" stroke-width="1.5"/><path d="M-4.6 -0.6 H4.6" stroke="#fff" stroke-width="3"/></g><g transform="translate(633.8,774)"><path d="M4.3 5 L9.6 10" stroke="#9c5414" stroke-width="3.4" stroke-linecap="round"/><path d="M4.6 5.3 L9.4 9.8" stroke="#e09a50" stroke-width="1.4" stroke-linecap="butt" stroke-dasharray="1 1"/><circle cx="0" cy="0" r="5.9" fill="url(#gLens)" stroke="#8797ab" stroke-width="1.5"/><path d="M-3.2 -1.2 V-3.2 H-1.2 M1.2 -3.2 H3.2 V-1.2 M3.2 1.2 V3.2 H1.2 M-1.2 3.2 H-3.2 V1.2" stroke="#fff" stroke-width="2" fill="none"/><circle r="1.8" fill="#8cb4dc"/></g><g transform="translate(665.4,775.4)"><rect x="-7.4" y="-7.4" width="14.8" height="14.8" fill="#dfe7ef" opacity="0.55"/><path d="M-8 -3.6 V-8 H-3.6 M3.6 -8 H8 V-3.6 M-8 3.6 V8 H-3.6" fill="none" stroke="#557a9e" stroke-width="1.5"/><path d="M-7 -3.2 V-7 H-3.2 M3.2 -7 H7 V-3.2 M-7 3.2 V7 H-3.2" fill="none" stroke="#a8c0d8" stroke-width="0.8"/><path d="M-3.4 0 H3.4 M0 -3.4 V3.4" stroke="#557a9e" stroke-width="1.6"/><path d="M7.5 6.6 L11 10.4" stroke="#c07a30" stroke-width="1.8" stroke-linecap="round"/><ellipse cx="5.2" cy="4" rx="3.8" ry="4.1" fill="#8fb4dc" stroke="#b4cce8" stroke-width="0.9"/></g><g transform="translate(704,777)"><rect x="-8.7" y="-9.899999999999999" width="3.4" height="3.4" fill="#e86060" stroke="#c02020" stroke-width="0.7"/><rect x="-8.7" y="-1.7" width="3.4" height="3.4" fill="#e86060" stroke="#c02020" stroke-width="0.7"/><rect x="7.3" y="-5.3" width="3.4" height="3.4" fill="#e86060" stroke="#c02020" stroke-width="0.7"/><path d="M-5 -8.2 H-0.6 C2.4 -8.2 2.4 0 -0.6 0 H-5" fill="none" stroke="#222" stroke-width="1.5"/><path d="M3.6 -8.6 V0.4 M3.6 -3.8 H7.4" stroke="#222" stroke-width="1.5" fill="none"/><circle cx="6.6" cy="6" r="4.6" fill="#12941a" stroke="#0a700f" stroke-width="0.6"/><path d="M3.8 6 H9.4 M6.6 3.2 V8.8" stroke="#fff" stroke-width="1.6"/></g><g transform="translate(736.4,776.4)"><path d="M-4.4 -5.6 H-1 L1.6 5.4 H5" fill="none" stroke="#222" stroke-width="1.4"/><rect x="-6.3999999999999995" y="-7.6" width="3.6" height="3.6" fill="#f4e04a" stroke="#c8b020" stroke-width="0.6"/><rect x="3.4000000000000004" y="3.6000000000000005" width="3.6" height="3.6" fill="#f4e04a" stroke="#c8b020" stroke-width="0.6"/></g><g transform="translate(767.6,776.4)"><path d="M-4.4 -5.6 H-0.6 L2.4 5.4 H5.6" fill="none" stroke="#222" stroke-width="2.4"/><rect x="-6.3999999999999995" y="-7.6" width="3.6" height="3.6" fill="#f4e04a" stroke="#c8b020" stroke-width="0.6"/><rect x="3.8" y="3.6000000000000005" width="3.6" height="3.6" fill="#f4e04a" stroke="#c8b020" stroke-width="0.6"/></g><g transform="translate(798.6,776.4)"><text x="-7.6" y="-1" font-family="'Liberation Sans','DejaVu Sans',sans-serif" font-size="10" fill="#8e8e8e" stroke="#8e8e8e" stroke-width="0.3" textLength="15.4" lengthAdjust="spacingAndGlyphs">abc</text><path d="M-7 4.6 H9" stroke="#222" stroke-width="1.1"/><rect x="-9.200000000000001" y="2.8" width="3.6" height="3.6" fill="#f4e04a" stroke="#c8b020" stroke-width="0.6"/><rect x="7.3999999999999995" y="2.8" width="3.6" height="3.6" fill="#f4e04a" stroke="#c8b020" stroke-width="0.6"/></g><g transform="translate(830,776.8)"><path d="M-8 0 H-2" stroke="#222" stroke-width="1.3"/><rect x="-10.200000000000001" y="-1.8" width="3.6" height="3.6" fill="#f4e04a" stroke="#c8b020" stroke-width="0.6"/><path d="M-2.4 -4 H5.199999999999999 C9.0 -4 10.6 -1.6 10.6 0 C10.6 1.6 9.0 4 5.199999999999999 4 H-2.4 Z" fill="#4c4c4c" stroke="#1c1c1c" stroke-width="1.2"/><path d="M-0.5999999999999999 -2.2 H5.0 C7.4 -2.2 8.6 -1 8.6 0" fill="none" stroke="#a8a8a8" stroke-width="0.9"/></g><g transform="translate(861,776.8)"><path d="M-5.8 -6.6 H2.8 L5.8 -3.5999999999999996 V6.6 H-5.8 Z" fill="#e0e0e0" stroke="#6c6c6c" stroke-width="1.1"/><path d="M2.8 -6.6 V-3.5999999999999996 H5.8" fill="#fff" stroke="#7a7a7a" stroke-width="0.8"/><circle cx="-3.0" cy="-1" r="1.3" fill="#777"/><circle cx="-3.0" cy="3" r="1.3" fill="#777"/><path d="M-0.5999999999999996 -1 H4.0 M-0.5999999999999996 3 H4.0" stroke="#777" stroke-width="1.5"/></g></svg>
<div class="tb" style="left:0px;top:793px;width:151px;height:32px"></div>
<div class="tb" style="left:152px;top:793px;width:216.5px;height:32px"></div>
<div class="tb" style="left:370px;top:793px;width:194px;height:32px"></div>
<div class="tb" style="left:566px;top:793px;width:177px;height:32px"></div>
<div class="tb" style="left:745px;top:793px;width:531px;height:32px"></div>
<div class="grip" style="left:3px;top:800.4px;height:18px"></div>
<div class="grip" style="left:155px;top:800.4px;height:18px"></div>
<div class="grip" style="left:373px;top:800.4px;height:18px"></div>
<div class="grip" style="left:570px;top:800.4px;height:18px"></div>
<div class="grip" style="left:748px;top:800.4px;height:18px"></div>
<div class="abs" style="left:378px;top:795px;width:29px;height:27px;border-radius:4px;background:#e6e6e6;border:1px solid #d4d4d4"></div>
<svg class="ic" style="left:0;top:793px" width="1278" height="34" viewBox="0 793 1278 34"><g transform="translate(22,808.3)"><circle cx="0" cy="0" r="7.6" fill="url(#gNavD)" stroke="#a4aec8" stroke-width="1.4"/><path d="M-6 0 L-0.8 -5.2 V-2.7 H4.8 V2.7 H-0.8 V5.2 Z" fill="#f6f6f8"/></g><g transform="translate(42.8,808.0)"><path d="M-4 0 H4" stroke="#8c8c8c" stroke-width="1.5"/><path d="M-2 1.6 H2 L0 3.2 Z" fill="#c4c4c4"/></g><g transform="translate(63,808.3)"><circle cx="0" cy="0" r="7.6" fill="url(#gNavD)" stroke="#a4aec8" stroke-width="1.4"/><path d="M6 0 L0.8 -5.2 V-2.7 H-4.8 V2.7 H0.8 V5.2 Z" fill="#f6f6f8"/></g><g transform="translate(83.8,808.0)"><path d="M-4 0 H4" stroke="#8c8c8c" stroke-width="1.5"/><path d="M-2 1.6 H2 L0 3.2 Z" fill="#c4c4c4"/></g><g transform="translate(103.8,808.3)"><circle cx="0" cy="0" r="7.6" fill="url(#gNavD)" stroke="#a4aec8" stroke-width="1.4"/><path d="M0 -6 L-5.2 -0.8 H-2.7 V4.8 H2.7 V-0.8 H5.2 Z" fill="#f6f6f8"/></g><g transform="translate(134.7,808.3)"><circle cx="0" cy="0" r="7.6" fill="url(#gNavD)" stroke="#a4aec8" stroke-width="1.4"/><path d="M0 -2.8 L-4.4 1.4 H-2.2 V5.8 H2.2 V1.4 H4.4 Z" fill="#f6f6f8"/><rect x="-5.4" y="-5.2" width="10.8" height="1.6" fill="#f6f6f8"/></g><g transform="translate(321,808.4)"><rect x="-8.6" y="-7.4" width="14" height="10.6" rx="0.8" fill="#f4f4f4" stroke="#6e6e6e" stroke-width="1.1"/><path d="M-8.6 -5.6 H5.4" stroke="#8a949c" stroke-width="1.2"/><path d="M-6.4 -2.6 H3.4 M-6.4 0.4 H-1" stroke="#7a7a7a" stroke-width="1.2"/><g transform="translate(5,3.9) scale(0.6)"><g opacity="1"><path d="M-7.5 -7.5 H7.5 V7.5 H-6 L-7.5 6 Z" fill="#6c84c8" stroke="#44589c" stroke-width="1"/><rect x="-5" y="-7" width="10" height="7.5" fill="#f4f6fb"/><rect x="-4" y="2.5" width="8" height="5" fill="#c9d0e4"/><rect x="-2.5" y="3.5" width="2" height="3.5" fill="#6c84c8"/></g></g></g><g transform="translate(351.6,808.4)"><rect x="-8.4" y="-8.4" width="14.4" height="11" fill="#f6f6f6" stroke="#7a7a7a" stroke-width="1.1"/><path d="M-8.4 -6.4 H6" stroke="#7a7a7a" stroke-width="1"/><path d="M-6.4 2.8 Q-0.6 -2.4 5.4 2.8 Q-0.6 7.6 -6.4 2.8 Z" fill="#e4ecfa" stroke="#5a72b4" stroke-width="1"/><circle cx="-0.5" cy="2.8" r="2.1" fill="#4a64ac"/><circle cx="8" cy="5.6" r="3.4" fill="#e46060" stroke="#f0b0b0" stroke-width="0.6"/><rect x="6" y="5" width="4" height="1.3" fill="#fff"/></g><g transform="translate(391.4,808.4)"><rect x="-8" y="-7.6" width="12.4" height="11" fill="#f2f2f2" stroke="#8a8a8a" stroke-width="1.1"/><path d="M-6 -2.4 L-2.6 1 L3.6 -6" fill="none" stroke="#d01818" stroke-width="2.6"/><g transform="translate(2.6,-5)"><path d="M0 0 V11.5 L2.7 9 L4.7 13.6 L6.6 12.8 L4.6 8.3 H8.2 Z" fill="#fff" stroke="#111" stroke-width="1" stroke-linejoin="round"/></g></g><g transform="translate(423,807.8)"><rect x="-10.7" y="-9.899999999999999" width="3.4" height="3.4" fill="#e86060" stroke="#c02020" stroke-width="0.7"/><rect x="-10.7" y="-1.7" width="3.4" height="3.4" fill="#e86060" stroke="#c02020" stroke-width="0.7"/><rect x="5.8999999999999995" y="-5.5" width="3.4" height="3.4" fill="#e86060" stroke="#c02020" stroke-width="0.7"/><path d="M-7 -8.2 H-3.4 C-0.4 -8.2 -0.4 0 -3.4 0 H-7" fill="none" stroke="#222" stroke-width="1.5"/><path d="M0.8 -8.6 V0.4 M0.8 -3.8 H6" stroke="#222" stroke-width="1.5" fill="none"/><g transform="translate(1.8,-4.6)"><path d="M0 0 V11.5 L2.7 9 L4.7 13.6 L6.6 12.8 L4.6 8.3 H8.2 Z" fill="#fff" stroke="#111" stroke-width="1" stroke-linejoin="round"/></g></g><g transform="translate(455,808.4)"><path d="M-8.4 -7 H-4.6 L-3.2 4.6 H0" fill="none" stroke="#222" stroke-width="1.3"/><rect x="-10.8" y="-8.8" width="3.6" height="3.6" fill="#f4e04a" stroke="#c8b020" stroke-width="0.6"/><rect x="-1.1" y="3.0999999999999996" width="3" height="3" fill="#f4e04a" stroke="#c8b020" stroke-width="0.6"/><g transform="translate(1,-4.6)"><path d="M0 0 V11.5 L2.7 9 L4.7 13.6 L6.6 12.8 L4.6 8.3 H8.2 Z" fill="#fff" stroke="#111" stroke-width="1" stroke-linejoin="round"/></g></g><g transform="translate(487,808.4)"><path d="M-9.6 0 H-4" stroke="#222" stroke-width="1.3"/><rect x="-11.8" y="-1.8" width="3.6" height="3.6" fill="#f4e04a" stroke="#c8b020" stroke-width="0.6"/><path d="M-4.2 -4 H3.3999999999999995 C7.2 -4 8.8 -1.6 8.8 0 C8.8 1.6 7.2 4 3.3999999999999995 4 H-4.2 Z" fill="#4c4c4c" stroke="#1c1c1c" stroke-width="1.2"/><path d="M-2.4000000000000004 -2.2 H3.2 C5.6000000000000005 -2.2 6.8 -1 6.8 0" fill="none" stroke="#a8a8a8" stroke-width="0.9"/><g transform="translate(0.4,-3.6)"><path d="M0 0 V11.5 L2.7 9 L4.7 13.6 L6.6 12.8 L4.6 8.3 H8.2 Z" fill="#fff" stroke="#111" stroke-width="1" stroke-linejoin="round"/></g></g><g transform="translate(517.4,808.4)"><text x="-9.4" y="4.2" font-family="'DejaVu Serif','Liberation Serif',serif" font-weight="bold" font-size="15" fill="#000" textLength="11.2" lengthAdjust="spacingAndGlyphs">T</text><g transform="translate(0,-4.6)"><path d="M0 0 V11.5 L2.7 9 L4.7 13.6 L6.6 12.8 L4.6 8.3 H8.2 Z" fill="#fff" stroke="#111" stroke-width="1" stroke-linejoin="round"/></g></g><g transform="translate(532.4,808.8)"><path d="M0 -10 V10" stroke="#7a7a7a" stroke-width="1.1"/></g><g transform="translate(550,808.4)"><g transform="translate(-3.4,-1.2)"><path d="M-5.4 -6.2 H2.4000000000000004 L5.4 -3.2 V6.2 H-5.4 Z" fill="#e0e0e0" stroke="#6c6c6c" stroke-width="1.1"/><path d="M2.4000000000000004 -6.2 V-3.2 H5.4" fill="#fff" stroke="#7a7a7a" stroke-width="0.8"/><circle cx="-2.6000000000000005" cy="-1" r="1.3" fill="#777"/><circle cx="-2.6000000000000005" cy="3" r="1.3" fill="#777"/><path d="M-0.20000000000000018 -1 H3.6000000000000005 M-0.20000000000000018 3 H3.6000000000000005" stroke="#777" stroke-width="1.5"/></g><g transform="translate(0.8,-5)"><path d="M0 0 V11.5 L2.7 9 L4.7 13.6 L6.6 12.8 L4.6 8.3 H8.2 Z" fill="#fff" stroke="#111" stroke-width="1" stroke-linejoin="round"/></g></g><g transform="translate(735.6,809.0)"><path d="M-4.2 -2 H4.2 L0 2.2 Z" fill="#b40000"/></g></svg>
<div class="combo" style="left:162px;top:798px;width:144px;height:22px;font-size:10.9px;line-height:21.6px;padding-left:3px">Basic<i></i></div>
<div class="combo" style="left:577px;top:799px;width:147px;height:20px;line-height:18px;padding-left:23px;color:#c4c4c4;font-weight:bold;font-size:11.5px">Search<i style="width:16px"></i><svg class="ic" style="left:3px;top:2px" width="18" height="15" viewBox="0 0 18 15"><circle cx="5.6" cy="5.4" r="3.6" fill="#f4f4f4" stroke="#333" stroke-width="1.5"/><path d="M8.2 8.2 L11.6 12" stroke="#333" stroke-width="2" stroke-linecap="round"/><path d="M11.6 5.4 H15.6 L13.6 7.6 Z" fill="#333"/></svg></div>
<div class="abs" style="left:0;top:825px;width:182px;height:534px;background:#efefef"></div>
<div class="split" style="top:825px;height:534px"></div>
<div class="panelhdr" style="top:826px;height:19px;line-height:17px">Navigator<div class="pbtn" style="left:137px;top:0.4px;width:13px;height:13.6px"></div><div class="pbtn" style="left:152.5px;top:0.4px;width:13px;height:13.6px"></div><div class="pbtn" style="left:167.5px;top:0.4px;width:13px;height:13.6px"></div><svg class="ic" style="left:137px;top:0.4px" width="45" height="14" viewBox="0 0 45 14"><text x="3.2" y="11" font-family="'Liberation Sans','DejaVu Sans',sans-serif" font-weight="bold" font-size="11.5" fill="#111">?</text><path d="M21 3.2 H26.2 V7 M18.6 6 H23.6 V10.6 H18.6 Z" fill="none" stroke="#111" stroke-width="1.5"/><path d="M33.6 3.4 L40 10 M40 3.4 L33.6 10" stroke="#111" stroke-width="1.6"/></svg></div>
<div class="abs" style="left:0;top:847px;width:182px;text-align:center;font-weight:bold;font-size:12px;line-height:14px;color:#222">Schematic</div>
<div class="abs" style="left:0;top:861px;width:178px;text-align:center;font-size:11px;line-height:14px;color:#222">inverter</div>
<div class="abs" style="left:0;top:878px;width:182px;height:1px;background:#b4b4b4"></div>
<div class="nav" style="top:0;height:0">
<div class="sec" style="top:883px;transform:scaleX(0.835);transform-origin:0 50%">OBJECTS</div>
<div class="dtri" style="top:887px"></div>
<div class="row" style="top:900px">All</div>
<div class="tri" style="top:903.5px"></div>
<div class="row" style="top:918px">Instances</div>
<div class="tri" style="top:921.5px"></div>
<div class="cnt" style="top:918px">4</div>
<div class="row" style="top:936px">Nets</div>
<div class="tri" style="top:939.5px"></div>
<div class="cnt" style="top:936px">4</div>
<div class="row" style="top:954px">Pins</div>
<div class="tri" style="top:957.5px"></div>
<div class="cnt" style="top:954px">2</div>
<div class="row" style="top:972px">Nets and Pins</div>
<div class="tri" style="top:975.5px"></div>
<div class="sec" style="top:996px;transform:scaleX(0.9);transform-origin:0 50%">GROUPS</div>
<div class="dtri" style="top:1000px"></div>
<div class="row" style="top:1013px">Cells</div>
<div class="tri" style="top:1016.5px"></div>
<div class="row" style="top:1031px">Types</div>
<div class="tri" style="top:1034.5px"></div>
</div>
<svg class="ic" style="left:0;top:1140px" width="182" height="20" viewBox="0 0 182 20"><path d="M5 10 H13 M9 6 V14" stroke="#444" stroke-width="1.4"/><path d="M26.4 10 H33.6" stroke="#bbb" stroke-width="1.4"/><rect x="166.6" y="4.4" width="8.6" height="11" fill="none" stroke="#333" stroke-width="1.3"/><path d="M170.9 4.4 V15.4" stroke="#333" stroke-width="1.1"/></svg>
<div class="abs" style="left:0;top:1160px;width:182px;height:6px;background:#d4d4d8"></div>
<div class="panelhdr" style="top:1166px;height:20px;line-height:19px"><span style="display:inline-block;transform:scaleX(0.96);transform-origin:0 50%">Property Editor</span><div class="pbtn" style="left:137px;top:2px;width:13px;height:13.6px"></div><div class="pbtn" style="left:152.5px;top:2px;width:13px;height:13.6px"></div><div class="pbtn" style="left:167.5px;top:2px;width:13px;height:13.6px"></div><svg class="ic" style="left:137px;top:2px" width="45" height="14" viewBox="0 0 45 14"><text x="3.2" y="11" font-family="'Liberation Sans','DejaVu Sans',sans-serif" font-weight="bold" font-size="11.5" fill="#111">?</text><path d="M21 3.2 H26.2 V7 M18.6 6 H23.6 V10.6 H18.6 Z" fill="none" stroke="#111" stroke-width="1.5"/><path d="M33.6 3.4 L40 10 M40 3.4 L33.6 10" stroke="#111" stroke-width="1.6"/></svg></div>
<div class="abs" style="left:3px;top:1189px;width:175px;height:165px;background:#fff;border-top:2px solid #111;border-left:2px solid #111;border-right:1px solid #ddd;border-bottom:1px solid #ddd"></div>
<div class="abs" style="left:5px;top:1338px;width:172px;height:15px;background:#9b9b9b"></div>
<div class="abs" style="left:5px;top:1338px;width:15px;height:15px;background:#e0e0e0"></div><div class="abs" style="left:161px;top:1338px;width:16px;height:15px;background:#e0e0e0"></div>
<div class="abs" style="left:20px;top:1338px;width:121px;height:15px;background:linear-gradient(#c8c8c8,#b8b8b8);border-radius:7px;border:1px solid #aaa"></div>
<svg class="ic" style="left:5px;top:1338px" width="172" height="15" viewBox="0 0 172 15"><path d="M9.6 3.6 L4 7.6 L9.6 11.6 Z" fill="#f4f4f4" stroke="#c4c4c4" stroke-width="0.8"/><path d="M161 3.6 L166.6 7.6 L161 11.6 Z" fill="#f4f4f4" stroke="#c4c4c4" stroke-width="0.8"/><path d="M72 4.6 V10.6 M74 4.6 V10.6 M76 4.6 V10.6 M78 4.6 V10.6" stroke="#888" stroke-width="0.9"/></svg>
<div class="abs" style="left:182px;top:825px;width:1096px;height:2px;background:#f4f4f4"></div>
<svg class="ic" style="left:188px;top:827px;background:#000" width="1089" height="532" viewBox="188 827 1089 532">
<path d="M205 838h1v1h-1zM205 871h1v1h-1zM205 904h1v1h-1zM205 937h1v1h-1zM205 970h1v1h-1zM205 1003h1v1h-1zM205 1036h1v1h-1zM205 1069h1v1h-1zM205 1102h1v1h-1zM205 1135h1v1h-1zM205 1168h1v1h-1zM205 1201h1v1h-1zM205 1234h1v1h-1zM205 1267h1v1h-1zM205 1300h1v1h-1zM205 1333h1v1h-1zM238 838h1v1h-1zM238 871h1v1h-1zM238 904h1v1h-1zM238 937h1v1h-1zM238 970h1v1h-1zM238 1003h1v1h-1zM238 1036h1v1h-1zM238 1069h1v1h-1zM238 1102h1v1h-1zM238 1135h1v1h-1zM238 1168h1v1h-1zM238 1201h1v1h-1zM238 1234h1v1h-1zM238 1267h1v1h-1zM238 1300h1v1h-1zM238 1333h1v1h-1zM271 838h1v1h-1zM271 871h1v1h-1zM271 904h1v1h-1zM271 937h1v1h-1zM271 970h1v1h-1zM271 1003h1v1h-1zM271 1036h1v1h-1zM271 1069h1v1h-1zM271 1102h1v1h-1zM271 1135h1v1h-1zM271 1168h1v1h-1zM271 1201h1v1h-1zM271 1234h1v1h-1zM271 1267h1v1h-1zM271 1300h1v1h-1zM271 1333h1v1h-1zM304 838h1v1h-1zM304 871h1v1h-1zM304 904h1v1h-1zM304 937h1v1h-1zM304 970h1v1h-1zM304 1003h1v1h-1zM304 1036h1v1h-1zM304 1069h1v1h-1zM304 1102h1v1h-1zM304 1135h1v1h-1zM304 1168h1v1h-1zM304 1201h1v1h-1zM304 1234h1v1h-1zM304 1267h1v1h-1zM304 1300h1v1h-1zM304 1333h1v1h-1zM337 838h1v1h-1zM337 871h1v1h-1zM337 904h1v1h-1zM337 937h1v1h-1zM337 970h1v1h-1zM337 1003h1v1h-1zM337 1036h1v1h-1zM337 1069h1v1h-1zM337 1102h1v1h-1zM337 1135h1v1h-1zM337 1168h1v1h-1zM337 1201h1v1h-1zM337 1234h1v1h-1zM337 1267h1v1h-1zM337 1300h1v1h-1zM337 1333h1v1h-1zM370 838h1v1h-1zM370 871h1v1h-1zM370 904h1v1h-1zM370 937h1v1h-1zM370 970h1v1h-1zM370 1003h1v1h-1zM370 1036h1v1h-1zM370 1069h1v1h-1zM370 1102h1v1h-1zM370 1135h1v1h-1zM370 1168h1v1h-1zM370 1201h1v1h-1zM370 1234h1v1h-1zM370 1267h1v1h-1zM370 1300h1v1h-1zM370 1333h1v1h-1zM403 838h1v1h-1zM403 871h1v1h-1zM403 937h1v1h-1zM403 970h1v1h-1zM403 1003h1v1h-1zM403 1036h1v1h-1zM403 1069h1v1h-1zM403 1102h1v1h-1zM403 1135h1v1h-1zM403 1201h1v1h-1zM403 1234h1v1h-1zM403 1267h1v1h-1zM403 1300h1v1h-1zM403 1333h1v1h-1zM436 838h1v1h-1zM436 871h1v1h-1zM436 904h1v1h-1zM436 937h1v1h-1zM436 970h1v1h-1zM436 1003h1v1h-1zM436 1036h1v1h-1zM436 1069h1v1h-1zM436 1102h1v1h-1zM436 1135h1v1h-1zM436 1168h1v1h-1zM436 1201h1v1h-1zM436 1234h1v1h-1zM436 1267h1v1h-1zM436 1300h1v1h-1zM436 1333h1v1h-1zM469 838h1v1h-1zM469 871h1v1h-1zM469 904h1v1h-1zM469 937h1v1h-1zM469 970h1v1h-1zM469 1003h1v1h-1zM469 1036h1v1h-1zM469 1069h1v1h-1zM469 1102h1v1h-1zM469 1135h1v1h-1zM469 1168h1v1h-1zM469 1201h1v1h-1zM469 1234h1v1h-1zM469 1267h1v1h-1zM469 1300h1v1h-1zM469 1333h1v1h-1zM502 838h1v1h-1zM502 871h1v1h-1zM502 904h1v1h-1zM502 937h1v1h-1zM502 970h1v1h-1zM502 1003h1v1h-1zM502 1036h1v1h-1zM502 1069h1v1h-1zM502 1102h1v1h-1zM502 1135h1v1h-1zM502 1168h1v1h-1zM502 1201h1v1h-1zM502 1234h1v1h-1zM502 1267h1v1h-1zM502 1300h1v1h-1zM502 1333h1v1h-1zM535 838h1v1h-1zM535 871h1v1h-1zM535 904h1v1h-1zM535 937h1v1h-1zM535 970h1v1h-1zM535 1003h1v1h-1zM535 1036h1v1h-1zM535 1069h1v1h-1zM535 1102h1v1h-1zM535 1135h1v1h-1zM535 1168h1v1h-1zM535 1201h1v1h-1zM535 1234h1v1h-1zM535 1267h1v1h-1zM535 1300h1v1h-1zM535 1333h1v1h-1zM568 838h1v1h-1zM568 871h1v1h-1zM568 904h1v1h-1zM568 937h1v1h-1zM568 970h1v1h-1zM568 1003h1v1h-1zM568 1036h1v1h-1zM568 1069h1v1h-1zM568 1102h1v1h-1zM568 1135h1v1h-1zM568 1168h1v1h-1zM568 1201h1v1h-1zM568 1234h1v1h-1zM568 1267h1v1h-1zM568 1300h1v1h-1zM568 1333h1v1h-1zM601 838h1v1h-1zM601 871h1v1h-1zM601 904h1v1h-1zM601 937h1v1h-1zM601 970h1v1h-1zM601 1003h1v1h-1zM601 1036h1v1h-1zM601 1069h1v1h-1zM601 1102h1v1h-1zM601 1135h1v1h-1zM601 1168h1v1h-1zM601 1201h1v1h-1zM601 1234h1v1h-1zM601 1267h1v1h-1zM601 1300h1v1h-1zM601 1333h1v1h-1zM634 838h1v1h-1zM634 871h1v1h-1zM634 904h1v1h-1zM634 937h1v1h-1zM634 970h1v1h-1zM634 1003h1v1h-1zM634 1036h1v1h-1zM634 1069h1v1h-1zM634 1102h1v1h-1zM634 1135h1v1h-1zM634 1168h1v1h-1zM634 1201h1v1h-1zM634 1234h1v1h-1zM634 1267h1v1h-1zM634 1300h1v1h-1zM634 1333h1v1h-1zM667 838h1v1h-1zM667 871h1v1h-1zM667 937h1v1h-1zM667 970h1v1h-1zM667 1003h1v1h-1zM667 1036h1v1h-1zM667 1069h1v1h-1zM667 1102h1v1h-1zM667 1135h1v1h-1zM667 1201h1v1h-1zM667 1234h1v1h-1zM667 1267h1v1h-1zM667 1300h1v1h-1zM667 1333h1v1h-1zM700 838h1v1h-1zM700 871h1v1h-1zM700 904h1v1h-1zM700 937h1v1h-1zM700 970h1v1h-1zM700 1003h1v1h-1zM700 1036h1v1h-1zM700 1069h1v1h-1zM700 1102h1v1h-1zM700 1135h1v1h-1zM700 1168h1v1h-1zM700 1201h1v1h-1zM700 1234h1v1h-1zM700 1267h1v1h-1zM700 1300h1v1h-1zM700 1333h1v1h-1zM733 838h1v1h-1zM733 871h1v1h-1zM733 904h1v1h-1zM733 937h1v1h-1zM733 970h1v1h-1zM733 1003h1v1h-1zM733 1036h1v1h-1zM733 1069h1v1h-1zM733 1102h1v1h-1zM733 1135h1v1h-1zM733 1168h1v1h-1zM733 1201h1v1h-1zM733 1234h1v1h-1zM733 1267h1v1h-1zM733 1300h1v1h-1zM733 1333h1v1h-1zM766 838h1v1h-1zM766 871h1v1h-1zM766 904h1v1h-1zM766 937h1v1h-1zM766 970h1v1h-1zM766 1003h1v1h-1zM766 1036h1v1h-1zM766 1069h1v1h-1zM766 1102h1v1h-1zM766 1135h1v1h-1zM766 1168h1v1h-1zM766 1201h1v1h-1zM766 1234h1v1h-1zM766 1267h1v1h-1zM766 1300h1v1h-1zM766 1333h1v1h-1zM799 838h1v1h-1zM799 871h1v1h-1zM799 904h1v1h-1zM799 937h1v1h-1zM799 970h1v1h-1zM799 1003h1v1h-1zM799 1036h1v1h-1zM799 1069h1v1h-1zM799 1102h1v1h-1zM799 1135h1v1h-1zM799 1168h1v1h-1zM799 1201h1v1h-1zM799 1234h1v1h-1zM799 1267h1v1h-1zM799 1300h1v1h-1zM799 1333h1v1h-1zM832 838h1v1h-1zM832 871h1v1h-1zM832 904h1v1h-1zM832 937h1v1h-1zM832 970h1v1h-1zM832 1003h1v1h-1zM832 1036h1v1h-1zM832 1069h1v1h-1zM832 1102h1v1h-1zM832 1135h1v1h-1zM832 1168h1v1h-1zM832 1201h1v1h-1zM832 1234h1v1h-1zM832 1267h1v1h-1zM832 1300h1v1h-1zM832 1333h1v1h-1zM865 838h1v1h-1zM865 871h1v1h-1zM865 904h1v1h-1zM865 937h1v1h-1zM865 970h1v1h-1zM865 1003h1v1h-1zM865 1036h1v1h-1zM865 1069h1v1h-1zM865 1102h1v1h-1zM865 1135h1v1h-1zM865 1168h1v1h-1zM865 1201h1v1h-1zM865 1234h1v1h-1zM865 1267h1v1h-1zM865 1300h1v1h-1zM865 1333h1v1h-1zM898 838h1v1h-1zM898 871h1v1h-1zM898 904h1v1h-1zM898 937h1v1h-1zM898 970h1v1h-1zM898 1003h1v1h-1zM898 1036h1v1h-1zM898 1069h1v1h-1zM898 1102h1v1h-1zM898 1135h1v1h-1zM898 1168h1v1h-1zM898 1201h1v1h-1zM898 1234h1v1h-1zM898 1267h1v1h-1zM898 1300h1v1h-1zM898 1333h1v1h-1zM931 838h1v1h-1zM931 871h1v1h-1zM931 937h1v1h-1zM931 970h1v1h-1zM931 1003h1v1h-1zM931 1036h1v1h-1zM931 1069h1v1h-1zM931 1102h1v1h-1zM931 1135h1v1h-1zM931 1201h1v1h-1zM931 1234h1v1h-1zM931 1267h1v1h-1zM931 1300h1v1h-1zM931 1333h1v1h-1zM964 838h1v1h-1zM964 871h1v1h-1zM964 904h1v1h-1zM964 937h1v1h-1zM964 970h1v1h-1zM964 1003h1v1h-1zM964 1036h1v1h-1zM964 1069h1v1h-1zM964 1102h1v1h-1zM964 1135h1v1h-1zM964 1168h1v1h-1zM964 1201h1v1h-1zM964 1234h1v1h-1zM964 1267h1v1h-1zM964 1300h1v1h-1zM964 1333h1v1h-1zM997 838h1v1h-1zM997 871h1v1h-1zM997 904h1v1h-1zM997 937h1v1h-1zM997 970h1v1h-1zM997 1003h1v1h-1zM997 1036h1v1h-1zM997 1069h1v1h-1zM997 1102h1v1h-1zM997 1135h1v1h-1zM997 1168h1v1h-1zM997 1201h1v1h-1zM997 1234h1v1h-1zM997 1267h1v1h-1zM997 1300h1v1h-1zM997 1333h1v1h-1zM1030 838h1v1h-1zM1030 871h1v1h-1zM1030 904h1v1h-1zM1030 937h1v1h-1zM1030 970h1v1h-1zM1030 1003h1v1h-1zM1030 1036h1v1h-1zM1030 1069h1v1h-1zM1030 1102h1v1h-1zM1030 1135h1v1h-1zM1030 1168h1v1h-1zM1030 1201h1v1h-1zM1030 1234h1v1h-1zM1030 1267h1v1h-1zM1030 1300h1v1h-1zM1030 1333h1v1h-1zM1063 838h1v1h-1zM1063 871h1v1h-1zM1063 904h1v1h-1zM1063 937h1v1h-1zM1063 970h1v1h-1zM1063 1003h1v1h-1zM1063 1036h1v1h-1zM1063 1069h1v1h-1zM1063 1102h1v1h-1zM1063 1135h1v1h-1zM1063 1168h1v1h-1zM1063 1201h1v1h-1zM1063 1234h1v1h-1zM1063 1267h1v1h-1zM1063 1300h1v1h-1zM1063 1333h1v1h-1zM1096 838h1v1h-1zM1096 871h1v1h-1zM1096 904h1v1h-1zM1096 937h1v1h-1zM1096 970h1v1h-1zM1096 1003h1v1h-1zM1096 1036h1v1h-1zM1096 1069h1v1h-1zM1096 1102h1v1h-1zM1096 1135h1v1h-1zM1096 1168h1v1h-1zM1096 1201h1v1h-1zM1096 1234h1v1h-1zM1096 1267h1v1h-1zM1096 1300h1v1h-1zM1096 1333h1v1h-1zM1129 838h1v1h-1zM1129 871h1v1h-1zM1129 904h1v1h-1zM1129 937h1v1h-1zM1129 970h1v1h-1zM1129 1003h1v1h-1zM1129 1036h1v1h-1zM1129 1069h1v1h-1zM1129 1102h1v1h-1zM1129 1135h1v1h-1zM1129 1168h1v1h-1zM1129 1201h1v1h-1zM1129 1234h1v1h-1zM1129 1267h1v1h-1zM1129 1300h1v1h-1zM1129 1333h1v1h-1zM1162 838h1v1h-1zM1162 871h1v1h-1zM1162 904h1v1h-1zM1162 937h1v1h-1zM1162 970h1v1h-1zM1162 1003h1v1h-1zM1162 1036h1v1h-1zM1162 1069h1v1h-1zM1162 1102h1v1h-1zM1162 1135h1v1h-1zM1162 1168h1v1h-1zM1162 1201h1v1h-1zM1162 1234h1v1h-1zM1162 1267h1v1h-1zM1162 1300h1v1h-1zM1162 1333h1v1h-1zM1195 838h1v1h-1zM1195 871h1v1h-1zM1195 937h1v1h-1zM1195 970h1v1h-1zM1195 1003h1v1h-1zM1195 1036h1v1h-1zM1195 1069h1v1h-1zM1195 1102h1v1h-1zM1195 1135h1v1h-1zM1195 1201h1v1h-1zM1195 1234h1v1h-1zM1195 1267h1v1h-1zM1195 1300h1v1h-1zM1195 1333h1v1h-1zM1228 838h1v1h-1zM1228 871h1v1h-1zM1228 904h1v1h-1zM1228 937h1v1h-1zM1228 970h1v1h-1zM1228 1003h1v1h-1zM1228 1036h1v1h-1zM1228 1069h1v1h-1zM1228 1102h1v1h-1zM1228 1135h1v1h-1zM1228 1168h1v1h-1zM1228 1201h1v1h-1zM1228 1234h1v1h-1zM1228 1267h1v1h-1zM1228 1300h1v1h-1zM1228 1333h1v1h-1zM1261 838h1v1h-1zM1261 871h1v1h-1zM1261 904h1v1h-1zM1261 937h1v1h-1zM1261 970h1v1h-1zM1261 1003h1v1h-1zM1261 1036h1v1h-1zM1261 1069h1v1h-1zM1261 1102h1v1h-1zM1261 1135h1v1h-1zM1261 1168h1v1h-1zM1261 1201h1v1h-1zM1261 1234h1v1h-1zM1261 1267h1v1h-1zM1261 1300h1v1h-1zM1261 1333h1v1h-1z" fill="#9a9a9a" shape-rendering="crispEdges"/><path d="M402 904h3v1h-3zM403 903h1v3h-1zM402 1168h3v1h-3zM403 1167h1v3h-1zM666 904h3v1h-3zM667 903h1v3h-1zM666 1168h3v1h-3zM667 1167h1v3h-1zM930 904h3v1h-3zM931 903h1v3h-1zM930 1168h3v1h-3zM931 1167h1v3h-1zM1194 904h3v1h-3zM1195 903h1v3h-1zM1194 1168h3v1h-3zM1195 1167h1v3h-1z" fill="#fff" shape-rendering="crispEdges"/>
<polygon points="729.6,945.3 736.4,945.3 741.3,950.2 741.3,957.0 736.4,961.9 729.6,961.9 724.7,957.0 724.7,950.2" fill="#38b0ff"/>
<polygon points="663.9,1094.0 670.7,1094.0 675.6,1098.9 675.6,1105.7 670.7,1110.6 663.9,1110.6 659.0,1105.7 659.0,1098.9" fill="#38b0ff"/>
<polygon points="729.6,1094.0 736.4,1094.0 741.3,1098.9 741.3,1105.7 736.4,1110.6 729.6,1110.6 724.7,1105.7 724.7,1098.9" fill="#38b0ff"/>
<polygon points="729.6,1242.2 736.4,1242.2 741.3,1247.1 741.3,1253.9 736.4,1258.8 729.6,1258.8 724.7,1253.9 724.7,1247.1" fill="#38b0ff"/>
<path d="M691 871.5 H775 M733.5 871.5 V930 M733.5 977 V994.5 H708.5 V1044.5 H733.5 V1063 M700.5 994 V1044.5 M708.5 1019.5 H726 M674 1019.5 H683.5 M717.5 989.5 V998.5 M733.5 1142 V1159.5 H708.5 V1209.5 H733.5 V1227 M700.5 1159 V1209.5 M708.5 1184.5 H726 M674 1184.5 H700.5 M733.5 1274 V1316.5 M716.5 1316.5 H750" fill="none" stroke="#46b47c" stroke-width="1" shape-rendering="crispEdges"/>
<path d="M717.5 989.5 L708.5 994.5 L717.5 998.5 M724.5 1204.5 L733.5 1209.5 L724.5 1214.5 Z M716.5 1316.5 L733.5 1333.5 L750 1316.5" fill="none" stroke="#46b47c" stroke-width="1.1"/>
<circle cx="691.9" cy="1019.5" r="8.4" fill="none" stroke="#46b47c" stroke-width="1.1"/>
<path d="M733 945 V963 M733 953.8 H800 V1019.5 H740 M667.4 1027 V1177 M633 1102.4 H667.4 M733 1076 V1128 M733 1102.4 H832 M740 1184.4 H800 V1250.2 H733 M733 1241 V1260" fill="none" stroke="#0000ff" stroke-width="3.4" stroke-linejoin="round" shape-rendering="crispEdges"/>
<rect x="726" y="930" width="14" height="14" fill="#ff0000"/>
<rect x="726" y="963" width="14" height="14" fill="#ff0000"/>
<rect x="660" y="1012.5" width="14" height="14" fill="#ff0000"/>
<rect x="726" y="1012.5" width="14" height="14" fill="#ff0000"/>
<rect x="726" y="1062.5" width="14" height="14" fill="#ff0000"/>
<rect x="726" y="1128" width="14" height="14" fill="#ff0000"/>
<rect x="660" y="1177.5" width="14" height="14" fill="#ff0000"/>
<rect x="726" y="1177.5" width="14" height="14" fill="#ff0000"/>
<rect x="726" y="1227" width="14" height="14" fill="#ff0000"/>
<rect x="726" y="1260.3" width="14" height="14" fill="#ff0000"/>
<polygon points="601,1087 619.5,1087 633.8,1102 619.5,1116.5 601,1116.5" fill="#ff0000"/><polygon points="832,1087 850.6,1087 865.4,1102 850.6,1116.5 832,1116.5" fill="#ff0000"/>
<text x="750" y="905" font-family="'DejaVu Sans Light','DejaVu Sans','Liberation Sans',sans-serif" font-weight="200" font-size="18" fill="#ff3434" stroke="#ff3434" stroke-width="0.3" textLength="28.0" lengthAdjust="spacingAndGlyphs">vdd</text>
<text x="742.6" y="986.5" font-family="'DejaVu Sans Light','DejaVu Sans','Liberation Sans',sans-serif" font-weight="200" font-size="18" fill="#ff3434" stroke="#ff3434" stroke-width="0.3" textLength="24.0" lengthAdjust="spacingAndGlyphs">P0</text><path d="M756.0 987.0 L764.9 972.7" stroke="#ff3434" stroke-width="1.1" fill="none"/>
<text x="684.4" y="986" font-family="'DejaVu Sans Light','DejaVu Sans','Liberation Sans',sans-serif" font-weight="200" font-size="18" fill="#fdf2de" stroke="#fdf2de" stroke-width="0.3" textLength="38.0" lengthAdjust="spacingAndGlyphs">vdd!</text>
<text x="679.4" y="1009.8" font-family="'DejaVu Sans Light','DejaVu Sans','Liberation Sans',sans-serif" font-weight="200" font-size="18.5" fill="#fdf2de" stroke="#fdf2de" stroke-width="0.3" textLength="10.8" lengthAdjust="spacingAndGlyphs">A</text>
<text x="714.2" y="1008.5" font-family="'DejaVu Sans Light','DejaVu Sans','Liberation Sans',sans-serif" font-weight="200" font-size="18" fill="#fdf2de" stroke="#fdf2de" stroke-width="0.3" textLength="37.6" lengthAdjust="spacingAndGlyphs">vdd!</text>
<text x="743.6" y="1011.6" font-family="'DejaVu Sans Light','DejaVu Sans','Liberation Sans',sans-serif" font-weight="200" font-size="13.8" fill="#f2a044" stroke="#f2a044" stroke-width="0.3" textLength="52.8" lengthAdjust="spacingAndGlyphs">ami06P</text><path d="M771.2 1012.1 L777.6 1000.9" stroke="#f2a044" stroke-width="1.1" fill="none"/>
<text x="743" y="1036.7" font-family="'DejaVu Sans Light','DejaVu Sans','Liberation Sans',sans-serif" font-weight="200" font-size="19" fill="#f2a044" stroke="#f2a044" stroke-width="0.3" textLength="80.8" lengthAdjust="spacingAndGlyphs">w=12.0u</text><path d="M802.7 1037.2 L810.9 1022.1" stroke="#f2a044" stroke-width="1.1" fill="none"/>
<text x="742.8" y="1060" font-family="'DejaVu Sans Light','DejaVu Sans','Liberation Sans',sans-serif" font-weight="200" font-size="18.5" fill="#f2a044" stroke="#f2a044" stroke-width="0.3" textLength="67.6" lengthAdjust="spacingAndGlyphs">l=600n</text><path d="M776.8 1060.5 L785.3 1045.8" stroke="#f2a044" stroke-width="1.1" fill="none"/><path d="M788.6 1060.5 L797.0 1045.8" stroke="#f2a044" stroke-width="1.1" fill="none"/>
<text x="707" y="1068" font-family="'DejaVu Sans Light','DejaVu Sans','Liberation Sans',sans-serif" font-weight="200" font-size="18.5" fill="#fdf2de" stroke="#fdf2de" stroke-width="0.3" textLength="15.8" lengthAdjust="spacingAndGlyphs">Ai</text>
<text x="743" y="1080.5" font-family="'DejaVu Sans Light','DejaVu Sans','Liberation Sans',sans-serif" font-weight="200" font-size="13.4" fill="#f2a044" stroke="#f2a044" stroke-width="0.3" textLength="23.8" lengthAdjust="spacingAndGlyphs">m:1</text>
<text x="567.8" y="1110.9" font-family="'DejaVu Sans Light','DejaVu Sans','Liberation Sans',sans-serif" font-weight="200" font-size="24.4" fill="#ff3434" stroke="#ff3434" stroke-width="0.3" textLength="14.6" lengthAdjust="spacingAndGlyphs">A</text>
<text x="874" y="1110.9" font-family="'DejaVu Sans Light','DejaVu Sans','Liberation Sans',sans-serif" font-weight="200" font-size="24.4" fill="#ff3434" stroke="#ff3434" stroke-width="0.3" textLength="19.0" lengthAdjust="spacingAndGlyphs">Ai</text>
<text x="707" y="1151.5" font-family="'DejaVu Sans Light','DejaVu Sans','Liberation Sans',sans-serif" font-weight="200" font-size="18.5" fill="#fdf2de" stroke="#fdf2de" stroke-width="0.3" textLength="15.8" lengthAdjust="spacingAndGlyphs">Ai</text>
<text x="742.6" y="1152" font-family="'DejaVu Sans Light','DejaVu Sans','Liberation Sans',sans-serif" font-weight="200" font-size="17.6" fill="#ff3434" stroke="#ff3434" stroke-width="0.3" textLength="25.2" lengthAdjust="spacingAndGlyphs">M0</text><path d="M758.6 1152.5 L766.3 1138.5" stroke="#ff3434" stroke-width="1.1" fill="none"/>
<text x="679.2" y="1175" font-family="'DejaVu Sans Light','DejaVu Sans','Liberation Sans',sans-serif" font-weight="200" font-size="18.5" fill="#fdf2de" stroke="#fdf2de" stroke-width="0.3" textLength="11.0" lengthAdjust="spacingAndGlyphs">A</text>
<text x="700.8" y="1174.2" font-family="'DejaVu Sans Light','DejaVu Sans','Liberation Sans',sans-serif" font-weight="200" font-size="18" fill="#fdf2de" stroke="#fdf2de" stroke-width="0.3" textLength="39.2" lengthAdjust="spacingAndGlyphs">gnd!</text>
<text x="742.6" y="1176.3" font-family="'DejaVu Sans Light','DejaVu Sans','Liberation Sans',sans-serif" font-weight="200" font-size="13.8" fill="#f2a044" stroke="#f2a044" stroke-width="0.3" textLength="53.8" lengthAdjust="spacingAndGlyphs">ami06N</text><path d="M769.7 1176.8 L776.0 1165.6" stroke="#f2a044" stroke-width="1.1" fill="none"/>
<text x="743" y="1201.4" font-family="'DejaVu Sans Light','DejaVu Sans','Liberation Sans',sans-serif" font-weight="200" font-size="19" fill="#f2a044" stroke="#f2a044" stroke-width="0.3" textLength="51.0" lengthAdjust="spacingAndGlyphs">w=6u</text>
<text x="742.8" y="1224.9" font-family="'DejaVu Sans Light','DejaVu Sans','Liberation Sans',sans-serif" font-weight="200" font-size="18.5" fill="#f2a044" stroke="#f2a044" stroke-width="0.3" textLength="67.6" lengthAdjust="spacingAndGlyphs">l=600n</text><path d="M776.8 1225.4 L785.3 1210.7" stroke="#f2a044" stroke-width="1.1" fill="none"/><path d="M788.6 1225.4 L797.0 1210.7" stroke="#f2a044" stroke-width="1.1" fill="none"/>
<text x="743" y="1247.5" font-family="'DejaVu Sans Light','DejaVu Sans','Liberation Sans',sans-serif" font-weight="200" font-size="13.4" fill="#f2a044" stroke="#f2a044" stroke-width="0.3" textLength="24.4" lengthAdjust="spacingAndGlyphs">m:1</text>
<text x="682" y="1232.4" font-family="'DejaVu Sans Light','DejaVu Sans','Liberation Sans',sans-serif" font-weight="200" font-size="18" fill="#fdf2de" stroke="#fdf2de" stroke-width="0.3" textLength="38.4" lengthAdjust="spacingAndGlyphs">gnd!</text>
<text x="751" y="1300.6" font-family="'DejaVu Sans Light','DejaVu Sans','Liberation Sans',sans-serif" font-weight="200" font-size="16.6" fill="#ff3434" stroke="#ff3434" stroke-width="0.3" textLength="28.6" lengthAdjust="spacingAndGlyphs">gnd</text>
</svg>
<div class="abs" style="left:1277px;top:731px;width:1px;height:668px;background:#2a2a2a"></div>
<div class="cmd" style="top:1377px">
<div class="abs" style="left:0;top:0;width:28px;height:21px;border-right:1px solid #444"></div><span style="left:1.5px">6(9)</span>
<div class="abs" style="left:1185px;top:3px;width:1px;height:17px;background:#444"></div><span style="left:1193px">Cmd:</span><span style="left:1228px;letter-spacing:-0.35px">Sel: 0</span>
<div class="abs" style="left:1264px;top:4px;width:9px;height:15px;background:#9c9c9e;border-left:1px solid #333;border-top:1px solid #555;border-right:1px solid #fff;border-bottom:1px solid #fff;box-shadow:1px 1px 0 #444"></div>
</div>
<div class="status" style="top:1359px;width:1277px"><svg class="ic" style="left:3px;top:5px" width="6" height="8" viewBox="0 0 6 8"><path d="M0.5 0V8M2.5 0V8M4.5 0V8" stroke="#aaa" stroke-width="0.8"/></svg><span style="left:9px;font-size:11.18px">mouse L: showClickInfo()</span><span style="left:579px;font-size:11.55px">M: schHiMousePopUp()</span><span style="left:1152.5px;font-size:11.2px">R: schHiMousePopUp()</span></div>
<div class="abs" style="left:0;top:1398px;width:1278px;height:3px;background:#0c0c0c"></div>
</body></html>
